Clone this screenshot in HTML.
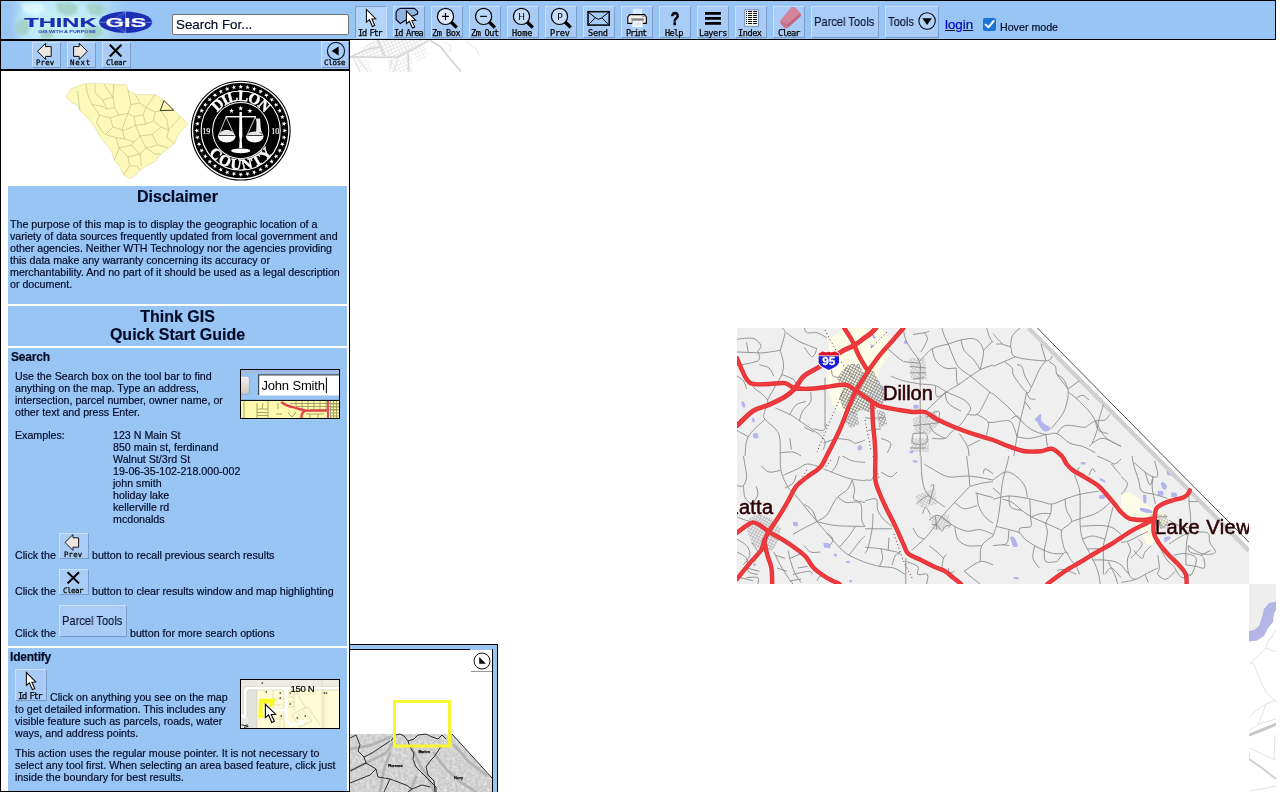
<!DOCTYPE html>
<html lang="en">
<head>
<meta charset="utf-8">
<title>Think GIS - Dillon County</title>
<style>
html,body{margin:0;padding:0;background:#fff;}
body{width:1280px;height:800px;overflow:hidden;position:relative;font-family:"Liberation Sans",Arial,sans-serif;font-size:10.667px;line-height:12px;color:#020a26;}
.abs{position:absolute;}
#map{position:absolute;left:0;top:0;width:1280px;height:800px;overflow:hidden;}
#toolbar{position:absolute;left:0;top:0;width:1276px;height:40px;box-sizing:border-box;border:1px solid #000;background:#99c5f5;}
#panel{position:absolute;left:0;top:39px;width:350px;height:753px;box-sizing:border-box;border:1px solid #000;border-top:2px solid #000;background:#fff;}
#nav{position:absolute;left:1px;top:41px;width:348px;height:28px;background:#99c5f5;border-bottom:2px solid #000;}
.cell{position:absolute;left:8px;width:339px;background:#99c5f5;}
.btn{position:absolute;box-sizing:border-box;background:#a8ccf6;border:1px solid;border-color:#c9e1fb #7c9cc8 #7c9cc8 #c9e1fb;}
.btn.on{background:#b4d4f9;border-color:#7c9cc8 #c9e1fb #c9e1fb #7c9cc8;}
.lb{position:absolute;font-family:"DejaVu Sans Mono","Liberation Mono",monospace;font-size:8.6px;line-height:10px;white-space:nowrap;color:#000;will-change:transform;-webkit-text-stroke:.25px #000;}
.t{position:absolute;white-space:nowrap;will-change:transform;-webkit-text-stroke:.18px #020a26;}
svg{will-change:transform;}
.h16{font-size:16px;line-height:18px;font-weight:bold;text-align:center;}
.h12{font-size:12px;line-height:14px;font-weight:bold;letter-spacing:-.2px;}
.pt{font-size:12.8px;line-height:14px;color:#07102a;transform:scaleX(.868);transform-origin:0 0;-webkit-text-stroke:.1px #07102a;}
</style>
</head>
<body>
<div id="map">
<svg class="abs" style="left:350px;top:40px;" width="140" height="32" viewBox="350 40 140 32"><defs><pattern id="fs" width="3.4" height="3.4" patternUnits="userSpaceOnUse" patternTransform="rotate(-24)"><path d="M0 .5H3.4M.5 0V3.4" stroke="#dedede" stroke-width=".8" fill="none"/></pattern></defs><path d="M356 55L366 45L378 40H426L416 48L406 53L397 57H372Z" fill="url(#fs)" opacity=".9"/><path d="M388 58L408 54L412 58L413 72H390Z" fill="url(#fs)" opacity=".7"/><path d="M410 52L424 45L428 50L426 58L418 62Z" fill="url(#fs)" opacity=".55"/><path d="M354 58L368 59L372 72H358Z" fill="url(#fs)" opacity=".5"/><g fill="none" stroke="#d6d6d6" stroke-linecap="round"><path d="M350.5 56.8L368 49.3L380.5 46.8" stroke-width="1.6"/><path d="M350.5 56.8L383 57.4L398 56.8L408 51.8L418 46.8L428 41" stroke-width="1.8"/><path d="M378 40.5L384.3 55.5" stroke-width="1.8"/><path d="M430.5 40.5L440.5 46.8L450.5 59.3L460.5 71" stroke-width="1.8"/><path d="M408 51.8L408.6 71" stroke-width="1.6"/><path d="M465.5 41L475.5 48L479.3 55" stroke-width=".9" stroke="#e2e2e2"/><path d="M444 42L451 46L450 52" stroke-width=".8" stroke="#e2e2e2"/><path d="M353 58L360 71M358 58L367 71M392 60L389 71M398 58L394 71" stroke-width=".9" stroke="#dcdcdc"/></g></svg>
<svg class="abs" style="left:1249px;top:584px;" width="27" height="216" viewBox="1249 584 27 216"><path d="M1249 584H1276V604L1270 606L1265 612L1263 622L1258 631L1249 634Z" fill="#eee"/><path d="M1249 631L1254 630L1259 626L1262 617L1264 609L1269 603L1276 601.5V610L1274 613L1273 622L1268 628L1264 636L1257 640.5L1249 641.5Z" fill="#b4b4e6"/><g fill="none" stroke="#dcdcdc" stroke-width=".8"><path d="M1276 630L1268 641L1266 648L1276 652M1268 641L1274 636M1266 648L1254 660L1250 663L1254 664L1260 680L1266 692L1276 702"/><path d="M1249 717L1258 709L1266 704L1276 700M1266 704L1262 715L1258 725M1249 748L1262 754L1276 760M1249 730L1262 723L1276 719M1275 735L1274 760M1250 752L1249 760"/><path d="M1249 791L1262 789L1276 786"/></g><path d="M1249 735L1262 730L1272 726L1276 724" fill="none" stroke="#c8c8c8" stroke-width="3"/><path d="M1249 759L1262 768L1276 779" fill="none" stroke="#d0d0d0" stroke-width="2"/></svg>
<svg class="abs" style="left:737px;top:328px;" width="512" height="256" viewBox="0 0 512 256">
<defs><pattern id="st" width="2.8" height="2.8" patternUnits="userSpaceOnUse" patternTransform="rotate(28)"><path d="M0 .5H2.8M.5 0V2.8" stroke="#8a8a8a" stroke-width=".85" fill="none"/></pattern><clipPath id="tc"><rect width="512" height="256"/></clipPath></defs>
<g clip-path="url(#tc)">
<rect width="512" height="256" fill="#efefef"/>
<path d="M293.4 0H512V220.8Z" fill="#fff"/>
<path d="M92 12 C94.0 10.5 99.3 5.0 104 3 C108.7 1.0 114.0 0.5 120 0 C126.0 -0.5 135.0 -1.3 140 0 C145.0 1.3 148.2 3.7 150 8 C151.8 12.3 152.3 20.0 151 26 C149.7 32.0 144.8 38.0 142 44 C139.2 50.0 136.7 56.3 134 62 C131.3 67.7 129.7 74.3 126 78 C122.3 81.7 116.7 83.7 112 84 C107.3 84.3 101.3 83.3 98 80 C94.7 76.7 93.3 70.7 92 64 C90.7 57.3 90.3 44.0 90 40Z" fill="#fdfde6" opacity=".9"/>
<path d="M384 166 C385.7 165.8 390.5 163.8 394 165 C397.5 166.2 401.0 170.3 405 173 C409.0 175.7 413.8 178.8 418 181 C422.2 183.2 427.8 184.2 430 186 C432.2 187.8 432.0 189.2 431 192 C430.0 194.8 426.5 199.3 424 203 C421.5 206.7 418.2 211.5 416 214 C413.8 216.5 412.7 219.0 411 218 C409.3 217.0 407.8 211.3 406 208 C404.2 204.7 402.7 200.7 400 198 C397.3 195.3 392.7 194.8 390 192 C387.3 189.2 385.0 182.8 384 181Z" fill="#fdfde6" opacity=".9"/>
<path d="M4.4 73.5 C4.8 73.6 6.3 73.2 7 74.1 C7.7 75.0 8.4 77.8 8.3 78.7 C8.2 79.6 7.0 79.7 6.4 79.4 C5.8 79.1 5.1 77.2 4.8 76.7ZM14.7 90.1 C15.1 90.2 16.6 90.0 17.1 90.7 C17.6 91.4 17.9 93.4 17.6 94 C17.3 94.6 15.8 94.2 15.4 94.3ZM15.8 106 C16.6 105.9 19.5 104.8 20.4 105.4 C21.3 106.1 21.7 109.1 21 109.9 C20.3 110.7 17.2 110.2 16.4 110.2ZM120.5 118.7 C121.0 118.4 122.9 116.3 123.7 116.7 C124.5 117.1 125.5 120.3 125.1 121.3 C124.7 122.3 121.8 122.4 121.1 122.6ZM134.8 6.8 C135.2 6.9 136.8 6.8 137.5 7.5 C138.2 8.2 139.0 10.4 138.8 10.8 C138.6 11.2 136.6 10.2 136.1 10.1ZM133.2 16.4 C133.6 16.5 135.3 16.5 135.8 17 C136.3 17.5 136.7 19.3 136.4 19.6 C136.1 19.9 134.2 19.1 133.8 19ZM143.8 58.2 C144.6 58.3 147.4 57.9 148.4 58.8 C149.4 59.7 150.3 62.7 149.8 63.4 C149.3 64.1 146.0 62.9 145.2 62.8ZM176.5 77.1 C177.3 77.1 180.3 76.4 181.1 76.9 C181.9 77.5 181.9 79.8 181.1 80.4 C180.3 81.0 177.3 80.4 176.5 80.4ZM172.4 122.7 C172.9 122.7 175.1 122.3 175.7 122.7 C176.2 123.1 176.2 124.9 175.7 125.3 C175.2 125.7 173.3 125.3 172.8 125.3ZM166.8 13.1 C167.2 13.0 168.9 12.0 169.4 12.4 C169.9 12.8 170.3 15.1 170 15.7 C169.7 16.2 167.8 15.7 167.4 15.7ZM297.6 91.9 C298.3 91.1 300.5 88.2 301.6 87.3 C302.7 86.4 303.8 85.9 304.2 86.7 C304.6 87.5 303.5 90.3 304.2 91.9 C304.9 93.5 306.7 95.3 308.1 96.5 C309.5 97.7 312.0 98.1 312.7 99.1 C313.4 100.1 313.1 101.7 312.1 102.4 C311.1 103.1 308.3 103.8 306.8 103.1 C305.3 102.4 304.0 100.0 302.9 98.5 C301.8 97.0 300.7 94.7 300.3 93.9ZM55.8 194 C56.5 194.1 59.5 193.6 60.3 194.3 C61.1 195.0 61.2 197.4 60.6 198 C60.0 198.6 57.1 197.8 56.4 197.7ZM86.3 215 C87.3 215.1 91.1 214.8 92.2 215.6 C93.3 216.4 93.8 219.3 92.9 220 C92.0 220.7 88.0 219.7 87 219.6ZM97.1 225.9 C97.5 225.9 99.3 225.7 99.7 226.1 C100.1 226.5 100.1 228.1 99.7 228.5 C99.3 228.9 97.7 228.5 97.3 228.5ZM109.2 233 C109.7 233.0 111.9 232.7 112.4 233 C112.9 233.3 112.9 234.7 112.4 235 C111.9 235.3 109.7 235.0 109.2 235ZM112.3 252.2 C112.7 252.2 114.5 251.9 114.9 252.2 C115.3 252.5 115.3 253.9 114.9 254.2 C114.5 254.5 112.7 254.2 112.3 254.2ZM16.3 235.5 C16.7 235.5 18.2 235.3 18.6 235.7 C19.0 236.1 19.0 237.5 18.6 237.9 C18.2 238.3 16.7 237.9 16.3 237.9ZM175.7 132.3 C176.5 132.4 179.6 132.3 180.3 132.7 C181.0 133.1 180.8 134.2 180.1 134.5 C179.4 134.8 176.6 134.2 175.9 134.2ZM272.8 209.1 C273.5 209.1 275.5 207.8 276.8 209.1 C278.1 210.4 280.3 215.3 280.7 217 C281.1 218.7 280.2 218.8 279.4 219 C278.6 219.2 277.0 219.3 276.1 218.3 C275.2 217.3 274.5 214.0 274.2 213.1ZM343.7 133.9 C344.5 134.0 347.6 133.9 348.3 134.3 C349.0 134.7 348.8 136.2 348.1 136.5 C347.4 136.8 344.6 136.3 343.9 136.3ZM362.2 167.5 C363.1 167.4 366.6 166.4 367.5 166.9 C368.4 167.4 368.6 169.9 367.7 170.6 C366.8 171.3 363.3 171.0 362.4 171.1ZM276.5 249 C277.3 249.1 280.3 248.9 281.1 249.3 C281.9 249.7 281.8 251.0 281.1 251.3 C280.4 251.6 277.5 251.1 276.8 251ZM362.3 150.1 C363.2 150.4 366.5 151.3 367.5 152.1 C368.5 152.9 368.8 154.6 368.2 154.7 C367.6 154.8 364.4 153.0 363.6 152.7ZM402.9 179.8 C403.8 179.9 406.1 180.0 408.1 180.4 C410.1 180.8 413.6 181.6 414.7 182.4 C415.8 183.2 415.8 184.7 414.7 185 C413.6 185.3 410.0 184.8 408.1 184.4 C406.2 184.0 403.9 182.7 403.1 182.4ZM420.6 162.9 C421.5 163.0 424.9 162.5 425.8 163.3 C426.7 164.1 426.6 166.8 425.8 167.5 C425.0 168.2 421.8 167.3 421 167.3ZM434.2 164.5 C435.1 164.6 438.5 164.1 439.4 164.9 C440.3 165.7 440.2 168.4 439.4 169.1 C438.6 169.8 435.2 168.9 434.4 168.9ZM423.8 155.1 C424.3 155.0 425.8 154.0 426.8 154.4 C427.8 154.8 429.4 156.5 429.7 157.7 C430.0 158.9 429.0 161.0 428.4 161.6 C427.8 162.2 426.6 161.8 426 161.2 C425.4 160.6 424.8 158.8 424.5 158.3ZM406 167.3 C406.5 167.3 408.7 166.2 409.2 167.5 C409.7 168.8 409.5 173.9 409 175.1 C408.5 176.3 406.8 174.9 406.4 174.9ZM427.1 209.2 C428.1 209.1 432.0 208.2 433 208.5 C434.0 208.8 433.9 210.1 433 211.1 C432.1 212.1 428.6 213.8 427.7 214.4ZM429.4 142.9 C430.3 143.0 433.8 142.8 434.7 143.6 C435.6 144.4 435.7 147.0 434.9 147.5 C434.1 148.0 430.9 146.9 430.1 146.8Z" fill="#b3b3ee"/>
<path d="M291.6 0L512 222.6" stroke="#d0d0d0" stroke-width="4.4" fill="none"/>
<path d="M300.4 0L340 40.4L426 127.6L512 214.2" stroke="#3a3a3a" stroke-width=".9" fill="none"/>
<path d="M104 44L112 36L122 36L126 44L136 42L140 50L146 60L150 72L140 80L132 84L124 82L116 86L106 80L102 70L106 60L100 52Z" fill="url(#st)"/>
<path d="M108 84L120 84L122 96L114 100L108 94Z" fill="url(#st)" opacity=".8"/>
<path d="M140 82L148 84L150 96L142 100Z" fill="url(#st)" opacity=".8"/>
<path d="M12 190L22 186L34 190L44 200L42 212L36 222L26 224L16 216L10 204Z" fill="url(#st)" opacity=".55"/>
<path d="M172 30L188 30L190 52L174 52Z" fill="url(#st)" opacity=".4"/>
<path d="M176 90L198 82L202 96L192 106L178 106Z" fill="url(#st)" opacity=".38"/>
<path d="M174 110L192 110L192 124L174 124Z" fill="url(#st)" opacity=".38"/>
<path d="M178 168L198 160L200 176L184 180Z" fill="url(#st)" opacity=".38"/>
<path d="M192 188L212 186L214 200L196 202Z" fill="url(#st)" opacity=".38"/>
<path d="M412 186L430 186L432 200L414 202Z" fill="url(#st)" opacity=".55"/>
<path d="M0 11.2 C2.7 11.1 12.0 9.3 16 10.4 C20.0 11.5 23.1 15.2 24 17.6 C24.9 20.0 18.4 24.0 21.6 24.8 C24.8 25.6 39.6 22.8 43.2 22.4M43.2 22.4 C44.0 19.5 47.7 8.5 48 4.8 C48.3 1.1 45.3 0.8 44.8 0M43.2 22.4 C43.7 24.5 46.1 31.2 46.4 35.2 C46.7 39.2 46.4 42.1 44.8 46.4 C43.2 50.7 39.2 56.5 36.8 60.8 C34.4 65.1 31.5 70.1 30.4 72M0 24 L21.6 24.8M0 37.6 C3.5 36.8 17.2 34.9 20.8 32.8 C24.4 30.7 21.5 26.1 21.6 24.8M49.6 4.8 C51.5 6.1 55.7 10.1 60.8 12.8 C65.9 15.5 76.8 19.5 80 20.8M67.2 0 C67.7 0.8 68.3 4.0 70.4 4.8 C72.5 5.6 76.8 4.0 80 4.8 C83.2 5.6 88.0 8.8 89.6 9.6M44.8 46.4 C46.7 47.2 53.6 49.6 56 51.2 C58.4 52.8 58.7 55.2 59.2 56M16 59.2 C18.4 61.3 28.5 67.7 30.4 72 C32.3 76.3 27.6 81.6 27.2 84.8 C26.8 88.0 25.6 87.7 28 91.2 C30.4 94.7 39.1 99.5 41.6 105.6 C44.1 111.7 42.9 124.3 43.2 128M28 91.2 C25.2 94.1 14.5 102.7 11.2 108.8 C7.9 114.9 8.5 124.8 8 128M0 102.4 L11.2 108.8M38.4 80 C40.8 81.1 48.8 84.3 52.8 86.4 C56.8 88.5 56.8 88.8 62.4 92.8 C68.0 96.8 82.4 105.6 86.4 110.4 C90.4 115.2 86.4 119.7 86.4 121.6M52.8 86.4 C53.9 84.8 56.5 78.9 59.2 76.8 C61.9 74.7 67.2 74.1 68.8 73.6M62.4 92.8 C62.9 91.2 63.7 86.4 65.6 83.2 C67.5 80.0 72.3 76.8 73.6 73.6 C74.9 70.4 73.6 65.6 73.6 64M88 49.6 L88 99.2M43.2 124.8 C45.3 124.7 52.5 123.5 56 124 C59.5 124.5 62.7 127.3 64 128M99.2 110.4 C101.3 110.7 108.8 111.2 112 112 C115.2 112.8 115.7 115.2 118.4 115.2 C121.1 115.2 126.4 112.5 128 112M86.4 115.2 L99.2 110.4M76.8 100.8 C78.4 101.1 84.3 103.2 86.4 102.4 C88.5 101.6 89.1 97.1 89.6 96M166.4 0 C166.7 1.6 166.9 6.4 168 9.6 C169.1 12.8 170.4 15.2 172.8 19.2 C175.2 23.2 180.7 28.8 182.4 33.6 C184.1 38.4 183.1 39.7 183.2 48 C183.3 56.3 183.2 69.9 183.2 83.2 C183.2 96.5 183.2 120.5 183.2 128M204.8 0 C205.3 1.6 206.9 6.9 208 9.6 C209.1 12.3 209.6 12.3 211.2 16 C212.8 19.7 215.7 28.0 217.6 32 C219.5 36.0 219.7 37.3 222.4 40 C225.1 42.7 231.7 46.7 233.6 48M182.4 33.6 C184.5 31.5 190.4 23.7 195.2 20.8 C200.0 17.9 206.4 17.5 211.2 16 C216.0 14.5 219.5 12.8 224 12 C228.5 11.2 234.7 9.5 238.4 11.2 C242.1 12.9 245.6 17.3 246.4 22.4 C247.2 27.5 243.7 38.4 243.2 41.6M187.2 4.8 C187.7 5.9 190.9 8.0 190.4 11.2 C189.9 14.4 185.1 21.9 184 24M176 6.4 C177.9 6.1 184.5 5.3 187.2 4.8 C189.9 4.3 191.2 3.5 192 3.2M249.6 0 C250.1 1.6 251.7 7.2 252.8 9.6 C253.9 12.0 255.5 13.6 256 14.4M246.4 22.4 L256 12.8M243.2 41.6 L256 36.8M219.2 40 C219.3 42.4 219.5 51.7 220 54.4 C220.5 57.1 222.0 55.7 222.4 56M233.6 48 C231.7 49.3 226.4 53.3 222.4 56 C218.4 58.7 214.7 60.0 209.6 64 C204.5 68.0 195.5 76.8 192 80 C188.5 83.2 189.3 82.7 188.8 83.2M183.2 56 C185.7 56.3 194.0 56.3 198.4 57.6 C202.8 58.9 204.8 61.6 209.6 64 C214.4 66.4 223.2 69.3 227.2 72 C231.2 74.7 233.1 77.6 233.6 80 C234.1 82.4 232.0 83.7 230.4 86.4 C228.8 89.1 226.7 93.1 224 96 C221.3 98.9 217.1 101.6 214.4 104 C211.7 106.4 211.2 109.3 208 110.4 C204.8 111.5 197.3 110.4 195.2 110.4M233.6 48 L243.2 41.6M233.6 48 C236.8 50.7 249.1 61.1 252.8 64 C256.5 66.9 255.5 65.3 256 65.6M252.8 64 C251.7 66.1 248.5 73.1 246.4 76.8 C244.3 80.5 242.7 84.8 240 86.4 C237.3 88.0 232.0 86.4 230.4 86.4M240 86.4 C241.9 87.7 249.6 90.7 251.2 94.4 C252.8 98.1 248.8 106.1 249.6 108.8 C250.4 111.5 254.9 110.1 256 110.4M251.2 94.4 L256 94.4M166.4 33.6 L182.4 35.2M172.8 44.8 L188.8 44.8M172.8 38.4 L188.8 40M176 51.2 L187.2 49.6M176 97.6 C178.7 97.3 187.5 96.5 192 96 C196.5 95.5 201.3 94.7 203.2 94.4M176 105.6 C178.1 105.6 186.7 104.0 188.8 105.6 C190.9 107.2 190.9 113.6 188.8 115.2 C186.7 116.8 178.1 116.8 176 115.2 C173.9 113.6 176.0 107.2 176 105.6M172.8 120 L188.8 120M188.8 89.6 C190.9 88.5 199.5 82.7 201.6 83.2 C203.7 83.7 201.6 91.2 201.6 92.8M222.4 105.6 C223.7 107.7 228.8 114.7 230.4 118.4 C232.0 122.1 231.7 126.4 232 128M230.4 118.4 L243.2 112M128 89.6 C129.1 89.7 130.9 90.4 134.4 90.4 C137.9 90.4 146.4 89.7 148.8 89.6M131.2 102.4 L144 100.8M256 5.6 C257.6 7.3 262.7 13.7 265.6 16 C268.5 18.3 271.5 17.1 273.6 19.2 C275.7 21.3 272.5 26.5 278.4 28.8 C284.3 31.1 302.7 32.9 308.8 32.8 C314.9 32.7 314.1 28.8 315.2 28M283.2 0 C281.9 1.3 276.8 4.8 275.2 8 C273.6 11.2 273.9 17.3 273.6 19.2M256 38.4 C257.9 37.6 263.5 35.2 267.2 33.6 C270.9 32.0 276.5 29.6 278.4 28.8M267.2 33.6 C268.5 34.7 273.6 37.6 275.2 40 C276.8 42.4 274.4 44.0 276.8 48 C279.2 52.0 286.7 62.1 289.6 64 C292.5 65.9 292.3 62.9 294.4 59.2 C296.5 55.5 300.0 46.0 302.4 41.6 C304.8 37.2 307.7 34.3 308.8 32.8M280 36.8 C280.8 37.1 283.5 36.5 284.8 38.4 C286.1 40.3 286.4 44.5 288 48 C289.6 51.5 293.3 57.3 294.4 59.2M312 33.6 C313.1 34.4 317.1 36.3 318.4 38.4 C319.7 40.5 318.1 42.9 320 46.4 C321.9 49.9 327.7 56.3 329.6 59.2 C331.5 62.1 331.1 61.9 331.2 64 C331.3 66.1 331.2 68.5 330.4 72 C329.6 75.5 328.7 80.5 326.4 84.8 C324.1 89.1 318.9 94.9 316.8 97.6 C314.7 100.3 314.1 100.3 313.6 100.8M331.2 60.8 L342.4 52.8M331.2 64 C332.5 65.1 335.7 67.2 339.2 70.4 C342.7 73.6 348.8 79.5 352 83.2 C355.2 86.9 355.7 88.5 358.4 92.8 C361.1 97.1 363.7 104.5 368 108.8 C372.3 113.1 381.3 116.8 384 118.4M366.4 76.8 C365.6 79.5 362.7 88.5 361.6 92.8 C360.5 97.1 361.1 98.7 360 102.4 C358.9 106.1 356.5 112.5 355.2 115.2 C353.9 117.9 352.5 117.9 352 118.4M348.8 99.2 C350.4 98.1 355.2 94.0 358.4 92.8 C361.6 91.6 365.6 93.1 368 92 C370.4 90.9 372.0 87.3 372.8 86.4M256 65.6 C258.7 68.0 267.2 75.3 272 80 C276.8 84.7 280.8 89.9 284.8 93.6 C288.8 97.3 292.0 100.3 296 102.4 C300.0 104.5 304.8 105.9 308.8 106.4 C312.8 106.9 316.0 104.1 320 105.6 C324.0 107.1 328.5 113.1 332.8 115.2 C337.1 117.3 341.3 116.8 345.6 118.4 C349.9 120.0 356.3 123.7 358.4 124.8M289.6 64 C289.1 66.7 287.5 75.2 286.4 80 C285.3 84.8 284.3 88.0 283.2 92.8 C282.1 97.6 281.1 102.9 280 108.8 C278.9 114.7 277.3 124.8 276.8 128M256 94.4 C258.7 94.1 268.5 92.0 272 92.8 C275.5 93.6 275.5 96.5 276.8 99.2 C278.1 101.9 279.5 107.2 280 108.8M273.6 91.2 C274.7 90.7 278.1 87.6 280 88 C281.9 88.4 284.0 92.7 284.8 93.6M280 108.8 C282.1 109.1 288.0 110.8 292.8 110.4 C297.6 110.0 306.1 107.1 308.8 106.4M308.8 106.4 L310.4 118.4M320 105.6 C321.3 104.3 323.7 98.7 328 97.6 C332.3 96.5 342.1 98.9 345.6 99.2 C349.1 99.5 348.3 99.2 348.8 99.2M355.2 115.2 C357.1 114.4 361.6 109.9 366.4 110.4 C371.2 110.9 381.1 117.1 384 118.4M289.6 64 C290.1 65.1 291.3 69.2 292.8 70.4 C294.3 71.6 297.5 71.1 298.4 71.2M288 73.6 L293.6 81.6M6.4 128 C6.7 129.6 7.5 134.1 8 137.6 C8.5 141.1 9.9 145.5 9.6 148.8 C9.3 152.1 8.0 156.1 6.4 157.6 C4.8 159.1 1.1 157.6 0 157.6M6.4 157.6 C6.7 159.6 6.7 166.5 8 169.6 C9.3 172.7 13.3 174.9 14.4 176M43.2 128 C43.3 130.4 43.2 138.1 44 142.4 C44.8 146.7 46.5 150.4 48 153.6 C49.5 156.8 50.9 159.2 52.8 161.6 C54.7 164.0 54.7 162.7 59.2 168 C63.7 173.3 74.9 187.5 80 193.6 C85.1 199.7 85.9 200.5 89.6 204.8 C93.3 209.1 98.7 215.5 102.4 219.2 C106.1 222.9 107.7 224.7 112 227.2 C116.3 229.7 125.3 233.2 128 234.4M46.4 147.2 C48.8 146.1 56.8 142.7 60.8 140.8 C64.8 138.9 66.7 136.3 70.4 136 C74.1 135.7 81.1 138.7 83.2 139.2M94.4 144 C95.2 142.9 97.9 140.3 99.2 137.6 C100.5 134.9 101.9 129.6 102.4 128M86.4 140.8 C87.7 141.3 90.1 142.4 94.4 144 C98.7 145.6 106.4 148.9 112 150.4 C117.6 151.9 125.3 152.4 128 152.8M80 193.6 C81.6 192.5 86.9 190.1 89.6 187.2 C92.3 184.3 94.1 179.1 96 176 C97.9 172.9 98.4 171.2 100.8 168.8 C103.2 166.4 108.0 164.4 110.4 161.6 C112.8 158.8 114.4 153.6 115.2 152M115.2 152 C115.6 153.6 117.3 158.4 117.6 161.6 C117.9 164.8 115.1 169.1 116.8 171.2 C118.5 173.3 126.1 173.9 128 174.4M100.8 168.8 C102.1 169.7 105.1 173.3 108.8 174.4 C112.5 175.5 120.5 172.3 123.2 175.2 C125.9 178.1 124.0 188.1 124.8 192 C125.6 195.9 127.5 197.3 128 198.4M80 193.6 C83.2 194.3 91.2 196.8 99.2 197.6 C107.2 198.4 123.2 198.3 128 198.4M56 206.4 C57.9 205.3 63.2 202.1 67.2 200 C71.2 197.9 77.9 194.7 80 193.6M102.4 219.2 C104.0 217.3 109.3 211.5 112 208 C114.7 204.5 117.3 200.0 118.4 198.4M112 227.2 C113.9 224.8 120.5 216.0 123.2 212.8 C125.9 209.6 127.2 208.8 128 208M51.2 222.4 C51.5 223.7 51.7 226.7 52.8 230.4 C53.9 234.1 55.7 240.8 57.6 244.8 C59.5 248.8 62.9 252.8 64 254.4M52.8 230.4 L64 225.6M36.8 224 C37.9 226.1 40.8 232.5 43.2 236.8 C45.6 241.1 49.1 246.4 51.2 249.6 C53.3 252.8 55.2 254.9 56 256M105.6 128 C107.2 128.8 111.5 131.7 115.2 132.8 C118.9 133.9 125.9 134.1 128 134.4M0 188.8 C1.3 189.3 5.3 191.1 8 192 C10.7 192.9 14.7 194.0 16 194.4M19.2 158.4 C19.5 159.7 21.3 163.5 20.8 166.4 C20.3 169.3 16.8 174.4 16 176M56 246.4 C58.7 245.9 68.8 243.2 72 243.2 C75.2 243.2 74.7 245.9 75.2 246.4M80 252.8 C80.5 252.0 81.6 248.5 83.2 248 C84.8 247.5 88.5 249.3 89.6 249.6M0 224 C1.6 225.1 7.7 227.2 9.6 230.4 C11.5 233.6 9.3 240.5 11.2 243.2 C13.1 245.9 19.2 245.9 20.8 246.4M9.6 249.6 C11.5 249.6 18.9 248.5 20.8 249.6 C22.7 250.7 20.8 254.9 20.8 256M48 160 C49.3 159.2 54.1 157.3 56 155.2 C57.9 153.1 58.7 148.5 59.2 147.2M184 128 C184.1 131.2 184.3 141.9 184.8 147.2 C185.3 152.5 186.0 156.5 187.2 160 C188.4 163.5 191.2 166.7 192 168M187.2 136 C188.5 136.8 191.2 138.7 195.2 140.8 C199.2 142.9 205.1 147.6 211.2 148.8 C217.3 150.0 224.5 147.5 232 148 C239.5 148.5 252.0 151.3 256 152M229.6 128 C230.0 131.3 231.5 142.9 232 148 C232.5 153.1 232.7 156.7 232.8 158.4M232.8 158.4 C230.3 161.1 222.3 169.3 217.6 174.4 C212.9 179.5 208.5 184.3 204.8 188.8 C201.1 193.3 198.1 197.9 195.2 201.6 C192.3 205.3 190.7 207.7 187.2 211.2 C183.7 214.7 176.5 220.5 174.4 222.4M232.8 158.4 C234.8 157.9 240.9 156.0 244.8 155.2 C248.7 154.4 254.1 153.9 256 153.6M240 164.8 C240.3 166.9 240.3 173.6 241.6 177.6 C242.9 181.6 245.6 185.9 248 188.8 C250.4 191.7 254.7 194.1 256 195.2M238.4 164.8 L256 169.6M204.8 188.8 C206.9 190.4 213.3 196.0 217.6 198.4 C221.9 200.8 226.1 202.7 230.4 203.2 C234.7 203.7 238.9 201.1 243.2 201.6 C247.5 202.1 253.9 205.6 256 206.4M193.6 158.4 C194.1 158.1 196.5 155.7 196.8 156.8 C197.1 157.9 196.0 161.6 195.2 164.8 C194.4 168.0 192.5 174.1 192 176M179.2 176 C180.5 174.9 185.1 170.9 187.2 169.6 C189.3 168.3 190.4 167.7 192 168 C193.6 168.3 194.1 169.3 196.8 171.2 C199.5 173.1 206.1 177.9 208 179.2M185.6 185.6 C186.1 184.5 187.5 178.9 188.8 179.2 C190.1 179.5 192.8 185.9 193.6 187.2M192 192 C193.3 191.2 197.3 187.2 200 187.2 C202.7 187.2 205.6 190.4 208 192 C210.4 193.6 214.4 195.7 214.4 196.8 C214.4 197.9 209.6 197.3 208 198.4 C206.4 199.5 206.1 203.5 204.8 203.2 C203.5 202.9 201.6 197.9 200 196.8 C198.4 195.7 196.0 196.8 195.2 196.8M198.4 188.8 L200 201.6M128 200.8 L155.2 200.8M136 185.6 C135.9 188.0 136.0 194.4 135.2 200 C134.4 205.6 132.4 214.9 131.2 219.2 C130.0 223.5 128.5 224.5 128 225.6M128 219.2 C130.7 219.5 138.1 219.9 144 220.8 C149.9 221.7 160.0 224.1 163.2 224.8M128 234.4 C130.4 235.1 137.6 237.5 142.4 238.4 C147.2 239.3 152.5 238.7 156.8 240 C161.1 241.3 166.1 245.3 168 246.4M152 209.6 L151.2 222.4M168.8 230.4 L168.8 256M169.6 233.6 C171.5 234.4 178.9 236.3 180.8 238.4 C182.7 240.5 179.2 245.1 180.8 246.4 C182.4 247.7 188.9 244.8 190.4 246.4 C191.9 248.0 189.7 254.4 189.6 256M204.8 240 C205.1 238.4 205.6 232.7 206.4 230.4 C207.2 228.1 209.1 227.1 209.6 226.4M243.2 233.6 C243.5 230.9 242.7 221.9 244.8 217.6 C246.9 213.3 254.1 209.6 256 208M227.2 243.2 C229.9 241.6 238.4 234.7 243.2 233.6 C248.0 232.5 253.9 236.3 256 236.8M227.2 243.2 C228.8 244.5 234.1 249.1 236.8 251.2 C239.5 253.3 242.1 255.2 243.2 256M246.4 145.6 C246.7 144.8 246.4 140.8 248 140.8 C249.6 140.8 254.7 144.8 256 145.6M128 172.8 C129.9 172.5 137.1 169.6 139.2 171.2 C141.3 172.8 139.5 178.9 140.8 182.4 C142.1 185.9 144.8 189.3 147.2 192 C149.6 194.7 153.9 197.3 155.2 198.4M128 152 C129.1 152.0 133.1 152.5 134.4 152 C135.7 151.5 135.7 149.3 136 148.8M155.2 236.8 C155.7 235.2 157.1 229.1 158.4 227.2 C159.7 225.3 162.4 225.9 163.2 225.6M211.2 240 C211.5 240.8 211.7 244.3 212.8 244.8 C213.9 245.3 216.8 243.5 217.6 243.2M272 128 C271.5 130.1 269.9 136.5 268.8 140.8 C267.7 145.1 266.4 149.3 265.6 153.6 C264.8 157.9 264.4 162.7 264 166.4 C263.6 170.1 263.7 171.7 263.2 176 C262.7 180.3 261.5 188.3 260.8 192 C260.1 195.7 260.0 195.7 259.2 198.4 C258.4 201.1 256.5 206.4 256 208M256 152 C258.1 150.7 264.8 144.5 268.8 144 C272.8 143.5 276.8 146.4 280 148.8 C283.2 151.2 286.3 154.9 288 158.4 C289.7 161.9 290.0 167.7 290.4 169.6M256 171.2 C258.7 170.7 266.3 168.1 272 168 C277.7 167.9 285.1 169.5 290.4 170.4 C295.7 171.3 299.9 172.7 304 173.6 C308.1 174.5 311.2 176.4 315.2 176 C319.2 175.6 323.5 172.8 328 171.2 C332.5 169.6 336.8 167.7 342.4 166.4 C348.0 165.1 358.4 163.7 361.6 163.2M265.6 171.2 C267.2 171.7 272.0 172.5 275.2 174.4 C278.4 176.3 281.6 180.0 284.8 182.4 C288.0 184.8 290.4 186.7 294.4 188.8 C298.4 190.9 303.7 192.9 308.8 195.2 C313.9 197.5 322.1 201.2 324.8 202.4M292.8 171.2 C292.9 174.1 293.5 184.3 293.6 188.8 C293.7 193.3 295.3 196.5 293.6 198.4 C291.9 200.3 285.1 198.9 283.2 200 C281.3 201.1 282.5 204.0 282.4 204.8M259.2 198.4 C261.3 198.9 268.1 200.5 272 201.6 C275.9 202.7 279.7 203.2 282.4 204.8 C285.1 206.4 285.5 209.1 288 211.2 C290.5 213.3 294.4 215.7 297.6 217.6 C300.8 219.5 304.0 221.1 307.2 222.4 C310.4 223.7 313.6 225.1 316.8 225.6 C320.0 226.1 324.8 225.6 326.4 225.6M314.4 176 C314.3 177.6 314.5 182.4 313.6 185.6 C312.7 188.8 309.3 192.0 308.8 195.2 C308.3 198.4 310.7 200.3 310.4 204.8 C310.1 209.3 307.7 219.5 307.2 222.4M328 171.2 C328.3 173.1 328.5 178.7 329.6 182.4 C330.7 186.1 335.2 190.3 334.4 193.6 C333.6 196.9 326.3 198.9 324.8 202.4 C323.3 205.9 325.1 211.1 325.6 214.4 C326.1 217.7 327.3 220.5 328 222.4 C328.7 224.3 329.3 225.1 329.6 225.6M334.4 193.6 C336.0 193.1 340.0 191.7 344 190.4 C348.0 189.1 354.4 187.5 358.4 185.6 C362.4 183.7 365.6 181.1 368 179.2 C370.4 177.3 372.0 175.2 372.8 174.4M337.6 147.2 C338.4 149.6 341.5 156.8 342.4 161.6 C343.3 166.4 343.1 169.9 343.2 176 C343.3 182.1 342.8 192.5 343.2 198.4 C343.6 204.3 344.4 207.5 345.6 211.2 C346.8 214.9 348.3 216.5 350.4 220.8 C352.5 225.1 356.5 232.5 358.4 236.8 C360.3 241.1 360.8 243.2 361.6 246.4 C362.4 249.6 362.9 254.4 363.2 256M343.2 198.4 C345.2 198.3 351.3 197.7 355.2 197.6 C359.1 197.5 362.9 197.2 366.4 197.6 C369.9 198.0 373.1 198.5 376 200 C378.9 201.5 382.7 205.3 384 206.4M376 179.2 C375.2 182.4 372.5 193.1 371.2 198.4 C369.9 203.7 368.8 208.0 368 211.2 C367.2 214.4 366.7 214.1 366.4 217.6 C366.1 221.1 366.4 227.2 366.4 232 C366.4 236.8 366.4 244.0 366.4 246.4M350.4 220.8 L366.4 220.8M355.2 232 C357.1 232.0 362.7 231.7 366.4 232 C370.1 232.3 374.7 232.8 377.6 233.6 C380.5 234.4 382.9 236.3 384 236.8M371.2 233.6 C372.3 235.7 376.0 242.7 377.6 246.4 C379.2 250.1 380.3 254.4 380.8 256M360 128 C361.9 128.8 368.3 131.5 371.2 132.8 C374.1 134.1 375.5 136.3 377.6 136 C379.7 135.7 382.9 132.0 384 131.2M374.4 136 C375.7 137.6 380.8 143.7 382.4 145.6 C384.0 147.5 383.7 146.9 384 147.2M256 217.6 C257.6 217.5 262.9 216.8 265.6 216.8 C268.3 216.8 270.9 217.5 272 217.6M320 233.6 C321.1 232.3 324.8 227.2 326.4 225.6 C328.0 224.0 328.5 223.2 329.6 224 C330.7 224.8 331.2 228.0 332.8 230.4 C334.4 232.8 337.6 235.7 339.2 238.4 C340.8 241.1 341.9 245.1 342.4 246.4M320 242.4 C321.3 242.3 324.8 240.9 328 241.6 C331.2 242.3 337.3 245.6 339.2 246.4M256 160 L263.2 166.4M337.6 147.2 L342.4 139.2M352 147.2 C352.5 146.1 354.1 141.3 355.2 140.8 C356.3 140.3 357.9 143.5 358.4 144M368 246.4 C369.1 245.3 371.7 239.5 374.4 240 C377.1 240.5 382.4 248.0 384 249.6M395.2 128 C395.5 129.6 395.7 133.6 396.8 137.6 C397.9 141.6 400.3 147.7 401.6 152 C402.9 156.3 402.1 160.8 404.8 163.2 C407.5 165.6 413.3 165.2 417.6 166.4 C421.9 167.6 428.3 169.7 430.4 170.4M396.8 134.4 C398.7 136.0 404.8 141.6 408 144 C411.2 146.4 413.9 148.3 416 148.8 C418.1 149.3 420.5 149.9 420.8 147.2 C421.1 144.5 418.1 135.2 417.6 132.8M416 148.8 C415.9 150.7 414.8 155.5 415.2 160 C415.6 164.5 417.9 173.3 418.4 176M384 148.8 C385.1 149.9 389.9 152.8 390.4 155.2 C390.9 157.6 388.3 161.3 387.2 163.2 C386.1 165.1 384.5 165.9 384 166.4M452 164.8 C452.0 166.4 451.7 170.4 452 174.4 C452.3 178.4 453.5 184.5 453.6 188.8 C453.7 193.1 453.5 195.7 452.8 200 C452.1 204.3 450.3 208.3 449.6 214.4 C448.9 220.5 448.9 233.1 448.8 236.8M452 173.6 L460.8 173.6M384 214.4 C385.3 214.1 389.1 213.9 392 212.8 C394.9 211.7 398.4 209.6 401.6 208 C404.8 206.4 409.6 204.0 411.2 203.2M390.4 214.4 C390.9 215.7 393.6 219.5 393.6 222.4 C393.6 225.3 390.7 228.0 390.4 232 C390.1 236.0 390.7 243.2 392 246.4 C393.3 249.6 395.7 251.2 398.4 251.2 C401.1 251.2 404.3 248.3 408 246.4 C411.7 244.5 418.7 241.1 420.8 240M396.8 222.4 C398.1 223.7 402.9 230.1 404.8 230.4 C406.7 230.7 406.4 226.1 408 224 C409.6 221.9 413.3 218.7 414.4 217.6M384 236.8 L392 246.4M420.8 227.2 C421.1 229.3 422.4 236.8 422.4 240 C422.4 243.2 419.7 244.5 420.8 246.4 C421.9 248.3 425.9 251.7 428.8 251.2 C431.7 250.7 436.8 244.5 438.4 243.2M422.4 217.6 C423.5 219.7 426.4 226.9 428.8 230.4 C431.2 233.9 435.5 237.1 436.8 238.4M432 216 C434.1 214.7 441.1 209.9 444.8 208 C448.5 206.1 450.1 205.3 454.4 204.8 C458.7 204.3 467.3 203.2 470.4 204.8 C473.5 206.4 471.5 211.2 472.8 214.4 C474.1 217.6 478.8 222.0 478.4 224 C478.0 226.0 473.3 226.4 470.4 226.4 C467.5 226.4 464.0 225.5 460.8 224 C457.6 222.5 452.8 218.7 451.2 217.6M451.2 217.6 C451.5 218.7 450.7 222.4 452.8 224 C454.9 225.6 461.6 225.9 464 227.2 C466.4 228.5 466.7 229.9 467.2 232 C467.7 234.1 468.5 238.9 467.2 240 C465.9 241.1 462.3 238.9 459.2 238.4 C456.1 237.9 450.5 237.1 448.8 236.8M436.8 227.2 C438.7 226.9 444.3 225.1 448 225.6 C451.7 226.1 458.1 226.9 459.2 230.4 C460.3 233.9 456.3 244.0 454.4 246.4 C452.5 248.8 449.1 245.1 448 244.8M384 254.4 C385.6 254.1 391.2 253.3 393.6 252.8 C396.0 252.3 397.6 251.5 398.4 251.2M401.6 211.2 C402.1 212.3 406.1 214.4 404.8 217.6 C403.5 220.8 395.5 228.3 393.6 230.4M408 144 C408.8 146.1 411.5 156.0 412.8 156.8 C414.1 157.6 415.5 150.1 416 148.8M419.2 188.8 L430.4 188.8M420.8 192 L425.6 198.4M422.4 192 C422.7 193.3 422.7 199.5 424 200 C425.3 200.5 429.3 196.0 430.4 195.2M0 48 C1.1 48.8 4.8 50.7 6.4 52.8 C8.0 54.9 9.1 59.5 9.6 60.8M94.4 40 C94.7 41.3 94.4 46.4 96 48 C97.6 49.6 102.7 49.3 104 49.6M22.4 36.8 C24.0 37.3 29.6 38.1 32 40 C34.4 41.9 36.0 46.7 36.8 48M67.2 19.2 C68.5 20.8 73.1 28.5 75.2 28.8 C77.3 29.1 79.2 22.1 80 20.8M9.6 14.4 L11.2 24M52.8 110.4 L54.4 121.6M67.2 99.2 L76.8 104M195.2 20.8 C195.7 22.7 196.3 28.8 198.4 32 C200.5 35.2 204.5 38.7 208 40 C211.5 41.3 217.3 40.0 219.2 40M224 12 C224.5 13.7 225.1 19.1 227.2 22.4 C229.3 25.7 234.1 28.8 236.8 32 C239.5 35.2 242.1 40.0 243.2 41.6M208 64 C208.5 65.9 208.5 72.0 211.2 75.2 C213.9 78.4 221.9 81.9 224 83.2M198.4 57.6 C198.7 59.5 198.1 67.7 200 68.8 C201.9 69.9 208.0 64.8 209.6 64M153.6 48 C155.7 48.8 161.5 51.5 166.4 52.8 C171.3 54.1 180.4 55.5 183.2 56M148.8 19.2 C150.7 20.8 157.1 26.4 160 28.8 C162.9 31.2 165.3 32.8 166.4 33.6M192 96 C192.8 97.3 194.1 101.6 196.8 104 C199.5 106.4 206.1 109.3 208 110.4M144 110.4 C145.6 111.2 152.5 112.8 153.6 115.2 C154.7 117.6 150.9 123.2 150.4 124.8M320 46.4 C321.1 47.2 324.5 48.8 326.4 51.2 C328.3 53.6 330.4 59.2 331.2 60.8M339.2 70.4 C340.3 69.9 343.5 66.9 345.6 67.2 C347.7 67.5 350.9 71.2 352 72M304 16 L308.8 32.8M259.2 16 L265.6 16M358.4 92.8 C358.9 94.4 359.5 100.3 361.6 102.4 C363.7 104.5 369.6 105.1 371.2 105.6M0 211.2 C1.6 212.3 7.5 214.9 9.6 217.6 C11.7 220.3 13.3 224.0 12.8 227.2 C12.3 230.4 7.5 235.2 6.4 236.8M14.4 214.4 C15.5 216.0 20.3 220.8 20.8 224 C21.3 227.2 18.1 232.0 17.6 233.6M9.6 240 L22.4 243.2M38.4 227.2 L48 230.4M40 240 L49.6 243.2M60.8 240 L70.4 238.4M52.8 252.8 L64 251.2M3.2 249.6 L16 252.8M89.6 204.8 C90.7 205.9 95.5 209.1 96 211.2 C96.5 213.3 93.3 216.5 92.8 217.6M67.2 176 C68.5 177.1 73.1 179.5 75.2 182.4 C77.3 185.3 79.2 191.7 80 193.6M24 137.6 C25.3 138.7 28.8 143.2 32 144 C35.2 144.8 41.3 142.7 43.2 142.4M67.2 217.6 C68.3 218.7 70.9 222.9 73.6 224 C76.3 225.1 81.6 224.0 83.2 224M144 144 C145.6 144.8 150.9 148.8 153.6 148.8 C156.3 148.8 158.9 144.8 160 144M217.6 198.4 C218.1 200.5 218.7 208.0 220.8 211.2 C222.9 214.4 226.4 216.5 230.4 217.6 C234.4 218.7 242.4 217.6 244.8 217.6M176 200 C176.8 201.3 178.9 206.1 180.8 208 C182.7 209.9 186.1 210.7 187.2 211.2M217.6 174.4 C219.2 175.5 223.5 180.3 227.2 180.8 C230.9 181.3 237.9 178.1 240 177.6M144 220.8 C144.3 222.4 145.9 227.5 145.6 230.4 C145.3 233.3 142.9 237.1 142.4 238.4M192 217.6 C193.3 218.7 197.6 221.9 200 224 C202.4 226.1 205.3 229.3 206.4 230.4M294.4 188.8 C296.0 188.3 300.8 186.1 304 185.6 C307.2 185.1 312.0 185.6 313.6 185.6M272 168 C272.3 169.9 271.5 176.8 273.6 179.2 C275.7 181.6 282.9 181.9 284.8 182.4M297.6 217.6 C297.3 219.7 295.2 226.7 296 230.4 C296.8 234.1 301.3 238.4 302.4 240M307.2 222.4 C307.5 224.3 306.7 231.7 308.8 233.6 C310.9 235.5 318.1 233.6 320 233.6M345.6 211.2 C347.2 210.7 351.5 208.0 355.2 208 C358.9 208.0 365.9 210.7 368 211.2M272 201.6 C271.7 203.7 271.5 211.9 270.4 214.4 C269.3 216.9 266.4 216.4 265.6 216.8M432 192 C433.3 192.8 436.5 195.5 440 196.8 C443.5 198.1 450.7 199.5 452.8 200M408 246.4 L411.2 254.4M464 227.2 L473.6 222.4M436.8 238.4 C438.1 240.3 441.9 248.3 444.8 249.6 C447.7 250.9 452.8 246.9 454.4 246.4" stroke="#8b8b8b" stroke-width=".92" fill="none" stroke-linejoin="round"/>
<path d="M88 2L102 28M104 34L116 50M106 64L96 86L80 124M134 20L150 4M128 92L134 122M136 128L142 150M157 206L166 232L176 252M94 132L88 140M70 142L64 150" stroke="#5a1420" stroke-width=".9" stroke-dasharray="1 2.6" fill="none"/>
<path d="M0 97.6 C2.7 95.2 10.7 86.5 16 83 C21.3 79.5 26.7 79.2 32 76.8 C37.3 74.4 43.7 71.5 48 68.8 C52.3 66.1 54.4 64.3 57.6 60.8 C60.8 57.3 63.0 51.6 67 48 C71.0 44.4 75.4 43.2 81.6 39.2 C87.8 35.2 98.1 27.6 104 24 C109.9 20.4 112.8 20.0 116.8 17.6 C120.8 15.2 125.1 11.7 128 9.6 C130.9 7.5 132.6 6.4 134.4 4.8 C136.2 3.2 138.2 0.8 139 0" stroke="#de3236" stroke-width="4.9" fill="none" stroke-linecap="round" stroke-linejoin="round"/>
<path d="M0 30.4 C0.8 32.3 3.2 38.1 4.8 41.6 C6.4 45.1 7.7 48.8 9.6 51.2 C11.5 53.6 12.3 55.2 16 56 C19.7 56.8 26.7 56.1 32 56 C37.3 55.9 43.7 54.5 48 55.2 C52.3 55.9 53.6 59.1 57.6 60 C61.6 60.9 66.9 60.9 72 60.8 C77.1 60.7 81.9 59.9 88 59.2 C94.1 58.5 103.7 56.3 108.8 56.8 C113.9 57.3 115.2 60.4 118.4 62.4 C121.6 64.4 124.8 66.7 128 68.8 C131.2 70.9 134.9 73.6 137.6 75.2 C140.3 76.8 140.3 77.3 144 78.4 C147.7 79.5 154.7 80.7 160 81.6 C165.3 82.5 171.3 83.6 176 84 C180.7 84.4 184.0 82.8 188 84 C192.0 85.2 195.1 88.7 200 91.2 C204.9 93.7 210.9 96.5 217.6 99.2 C224.3 101.9 233.6 105.1 240 107.2 C246.4 109.3 250.7 110.1 256 112 C261.3 113.9 266.7 116.5 272 118.4 C277.3 120.3 282.7 122.4 288 123.2 C293.3 124.0 299.5 123.6 304 123.2 C308.5 122.8 311.7 120.0 315.2 120.8 C318.7 121.6 322.4 125.5 324.8 128 C327.2 130.5 327.7 133.6 329.6 136 C331.5 138.4 333.1 140.3 336 142.4 C338.9 144.5 343.2 146.4 347.2 148.8 C351.2 151.2 356.5 154.1 360 156.8 C363.5 159.5 365.1 161.6 368 164.8 C370.9 168.0 374.9 172.8 377.6 176 C380.3 179.2 381.6 181.6 384 184 C386.4 186.4 388.5 189.1 392 190.4 C395.5 191.7 400.5 192.0 404.8 192 C409.1 192.0 415.5 190.7 417.6 190.4" stroke="#de3236" stroke-width="4.4" fill="none" stroke-linecap="round" stroke-linejoin="round"/>
<path d="M166.4 0 C164.8 1.9 160.5 6.9 156.8 11.2 C153.1 15.5 147.7 21.1 144 25.6 C140.3 30.1 137.1 34.7 134.4 38.4 C131.7 42.1 130.7 43.7 128 48 C125.3 52.3 121.1 58.9 118.4 64 C115.7 69.1 114.7 72.0 112 78.4 C109.3 84.8 106.1 94.1 102.4 102.4 C98.7 110.7 92.8 121.9 89.6 128 C86.4 134.1 86.4 135.7 83.2 139.2 C80.0 142.7 74.4 145.6 70.4 148.8 C66.4 152.0 62.4 154.4 59.2 158.4 C56.0 162.4 54.1 167.7 51.2 172.8 C48.3 177.9 44.8 183.7 41.6 188.8 C38.4 193.9 34.4 199.2 32 203.2 C29.6 207.2 28.5 209.6 27.2 212.8 C25.9 216.0 26.4 218.7 24 222.4 C21.6 226.1 16.8 230.4 12.8 235.2 C8.8 240.0 2.1 248.5 0 251.2" stroke="#de3236" stroke-width="4.4" fill="none" stroke-linecap="round" stroke-linejoin="round"/>
<path d="M107.2 0 C108.5 2.1 112.8 8.3 115.2 12.8 C117.6 17.3 119.5 22.9 121.6 27.2 C123.7 31.5 126.4 35.8 128 38.4 C129.6 41.0 130.5 42.2 131 43" stroke="#de3236" stroke-width="4.4" fill="none" stroke-linecap="round" stroke-linejoin="round"/>
<path d="M135.2 75.2 C135.3 78.7 135.6 89.9 136 96 C136.4 102.1 137.2 106.7 137.6 112 C138.0 117.3 138.3 121.3 138.4 128 C138.5 134.7 137.7 145.9 138.4 152 C139.1 158.1 140.7 160.3 142.4 164.8 C144.1 169.3 146.1 173.6 148.8 179.2 C151.5 184.8 155.5 192.3 158.4 198.4 C161.3 204.5 164.3 211.5 166.4 216 C168.5 220.5 168.3 222.9 171.2 225.6 C174.1 228.3 179.7 229.9 184 232 C188.3 234.1 192.8 236.5 196.8 238.4 C200.8 240.3 204.8 241.3 208 243.2 C211.2 245.1 213.3 247.5 216 249.6 C218.7 251.7 222.7 254.9 224 256" stroke="#de3236" stroke-width="4.4" fill="none" stroke-linecap="round" stroke-linejoin="round"/>
<path d="M0 204.8 C1.6 203.6 6.9 199.3 9.6 197.6 C12.3 195.9 13.9 194.5 16 194.4 C18.1 194.3 19.7 195.2 22.4 196.8 C25.1 198.4 28.3 201.6 32 204 C35.7 206.4 40.3 208.4 44.8 211.2 C49.3 214.0 55.2 217.9 59.2 220.8 C63.2 223.7 65.9 225.6 68.8 228.8 C71.7 232.0 73.3 236.5 76.8 240 C80.3 243.5 85.3 246.9 89.6 249.6 C93.9 252.3 100.3 254.9 102.4 256" stroke="#de3236" stroke-width="4.4" fill="none" stroke-linecap="round" stroke-linejoin="round"/>
<path d="M27.2 212.8 C27.7 215.2 29.2 222.7 30.4 227.2 C31.6 231.7 33.6 235.2 34.4 240 C35.2 244.8 35.1 253.3 35.2 256" stroke="#de3236" stroke-width="4.4" fill="none" stroke-linecap="round" stroke-linejoin="round"/>
<path d="M310.4 256 C313.3 253.9 322.4 246.9 328 243.2 C333.6 239.5 338.7 236.8 344 233.6 C349.3 230.4 354.9 226.9 360 224 C365.1 221.1 370.4 218.4 374.4 216 C378.4 213.6 380.3 212.0 384 209.6 C387.7 207.2 392.5 204.0 396.8 201.6 C401.1 199.2 406.1 197.1 409.6 195.2 C413.1 193.3 416.3 191.2 417.6 190.4" stroke="#de3236" stroke-width="4.4" fill="none" stroke-linecap="round" stroke-linejoin="round"/>
<path d="M417.6 190.4 C417.9 188.8 417.9 183.2 419.2 180.8 C420.5 178.4 422.7 177.5 425.6 176 C428.5 174.5 433.3 173.1 436.8 172 C440.3 170.9 444.0 170.7 446.4 169.6 C448.8 168.5 450.1 166.8 451.2 165.6 C452.3 164.4 452.5 162.9 452.8 162.4" stroke="#de3236" stroke-width="4.4" fill="none" stroke-linecap="round" stroke-linejoin="round"/>
<path d="M416.8 192 C416.8 194.1 415.9 200.8 416.8 204.8 C417.7 208.8 419.9 212.3 422.4 216 C424.9 219.7 428.5 223.5 432 227.2 C435.5 230.9 440.4 235.2 443.2 238.4 C446.0 241.6 447.7 243.5 448.8 246.4 C449.9 249.3 449.5 254.4 449.6 256" stroke="#de3236" stroke-width="4.4" fill="none" stroke-linecap="round" stroke-linejoin="round"/>
<path d="M0 97.6 C2.7 95.2 10.7 86.5 16 83 C21.3 79.5 26.7 79.2 32 76.8 C37.3 74.4 43.7 71.5 48 68.8 C52.3 66.1 54.4 64.3 57.6 60.8 C60.8 57.3 63.0 51.6 67 48 C71.0 44.4 75.4 43.2 81.6 39.2 C87.8 35.2 98.1 27.6 104 24 C109.9 20.4 112.8 20.0 116.8 17.6 C120.8 15.2 125.1 11.7 128 9.6 C130.9 7.5 132.6 6.4 134.4 4.8 C136.2 3.2 138.2 0.8 139 0" stroke="#f03a3e" stroke-width="3.1" fill="none" stroke-linecap="round" stroke-linejoin="round"/>
<path d="M0 30.4 C0.8 32.3 3.2 38.1 4.8 41.6 C6.4 45.1 7.7 48.8 9.6 51.2 C11.5 53.6 12.3 55.2 16 56 C19.7 56.8 26.7 56.1 32 56 C37.3 55.9 43.7 54.5 48 55.2 C52.3 55.9 53.6 59.1 57.6 60 C61.6 60.9 66.9 60.9 72 60.8 C77.1 60.7 81.9 59.9 88 59.2 C94.1 58.5 103.7 56.3 108.8 56.8 C113.9 57.3 115.2 60.4 118.4 62.4 C121.6 64.4 124.8 66.7 128 68.8 C131.2 70.9 134.9 73.6 137.6 75.2 C140.3 76.8 140.3 77.3 144 78.4 C147.7 79.5 154.7 80.7 160 81.6 C165.3 82.5 171.3 83.6 176 84 C180.7 84.4 184.0 82.8 188 84 C192.0 85.2 195.1 88.7 200 91.2 C204.9 93.7 210.9 96.5 217.6 99.2 C224.3 101.9 233.6 105.1 240 107.2 C246.4 109.3 250.7 110.1 256 112 C261.3 113.9 266.7 116.5 272 118.4 C277.3 120.3 282.7 122.4 288 123.2 C293.3 124.0 299.5 123.6 304 123.2 C308.5 122.8 311.7 120.0 315.2 120.8 C318.7 121.6 322.4 125.5 324.8 128 C327.2 130.5 327.7 133.6 329.6 136 C331.5 138.4 333.1 140.3 336 142.4 C338.9 144.5 343.2 146.4 347.2 148.8 C351.2 151.2 356.5 154.1 360 156.8 C363.5 159.5 365.1 161.6 368 164.8 C370.9 168.0 374.9 172.8 377.6 176 C380.3 179.2 381.6 181.6 384 184 C386.4 186.4 388.5 189.1 392 190.4 C395.5 191.7 400.5 192.0 404.8 192 C409.1 192.0 415.5 190.7 417.6 190.4" stroke="#f03a3e" stroke-width="2.6" fill="none" stroke-linecap="round" stroke-linejoin="round"/>
<path d="M166.4 0 C164.8 1.9 160.5 6.9 156.8 11.2 C153.1 15.5 147.7 21.1 144 25.6 C140.3 30.1 137.1 34.7 134.4 38.4 C131.7 42.1 130.7 43.7 128 48 C125.3 52.3 121.1 58.9 118.4 64 C115.7 69.1 114.7 72.0 112 78.4 C109.3 84.8 106.1 94.1 102.4 102.4 C98.7 110.7 92.8 121.9 89.6 128 C86.4 134.1 86.4 135.7 83.2 139.2 C80.0 142.7 74.4 145.6 70.4 148.8 C66.4 152.0 62.4 154.4 59.2 158.4 C56.0 162.4 54.1 167.7 51.2 172.8 C48.3 177.9 44.8 183.7 41.6 188.8 C38.4 193.9 34.4 199.2 32 203.2 C29.6 207.2 28.5 209.6 27.2 212.8 C25.9 216.0 26.4 218.7 24 222.4 C21.6 226.1 16.8 230.4 12.8 235.2 C8.8 240.0 2.1 248.5 0 251.2" stroke="#f03a3e" stroke-width="2.6" fill="none" stroke-linecap="round" stroke-linejoin="round"/>
<path d="M107.2 0 C108.5 2.1 112.8 8.3 115.2 12.8 C117.6 17.3 119.5 22.9 121.6 27.2 C123.7 31.5 126.4 35.8 128 38.4 C129.6 41.0 130.5 42.2 131 43" stroke="#f03a3e" stroke-width="2.6" fill="none" stroke-linecap="round" stroke-linejoin="round"/>
<path d="M135.2 75.2 C135.3 78.7 135.6 89.9 136 96 C136.4 102.1 137.2 106.7 137.6 112 C138.0 117.3 138.3 121.3 138.4 128 C138.5 134.7 137.7 145.9 138.4 152 C139.1 158.1 140.7 160.3 142.4 164.8 C144.1 169.3 146.1 173.6 148.8 179.2 C151.5 184.8 155.5 192.3 158.4 198.4 C161.3 204.5 164.3 211.5 166.4 216 C168.5 220.5 168.3 222.9 171.2 225.6 C174.1 228.3 179.7 229.9 184 232 C188.3 234.1 192.8 236.5 196.8 238.4 C200.8 240.3 204.8 241.3 208 243.2 C211.2 245.1 213.3 247.5 216 249.6 C218.7 251.7 222.7 254.9 224 256" stroke="#f03a3e" stroke-width="2.6" fill="none" stroke-linecap="round" stroke-linejoin="round"/>
<path d="M0 204.8 C1.6 203.6 6.9 199.3 9.6 197.6 C12.3 195.9 13.9 194.5 16 194.4 C18.1 194.3 19.7 195.2 22.4 196.8 C25.1 198.4 28.3 201.6 32 204 C35.7 206.4 40.3 208.4 44.8 211.2 C49.3 214.0 55.2 217.9 59.2 220.8 C63.2 223.7 65.9 225.6 68.8 228.8 C71.7 232.0 73.3 236.5 76.8 240 C80.3 243.5 85.3 246.9 89.6 249.6 C93.9 252.3 100.3 254.9 102.4 256" stroke="#f03a3e" stroke-width="2.6" fill="none" stroke-linecap="round" stroke-linejoin="round"/>
<path d="M27.2 212.8 C27.7 215.2 29.2 222.7 30.4 227.2 C31.6 231.7 33.6 235.2 34.4 240 C35.2 244.8 35.1 253.3 35.2 256" stroke="#f03a3e" stroke-width="2.6" fill="none" stroke-linecap="round" stroke-linejoin="round"/>
<path d="M310.4 256 C313.3 253.9 322.4 246.9 328 243.2 C333.6 239.5 338.7 236.8 344 233.6 C349.3 230.4 354.9 226.9 360 224 C365.1 221.1 370.4 218.4 374.4 216 C378.4 213.6 380.3 212.0 384 209.6 C387.7 207.2 392.5 204.0 396.8 201.6 C401.1 199.2 406.1 197.1 409.6 195.2 C413.1 193.3 416.3 191.2 417.6 190.4" stroke="#f03a3e" stroke-width="2.6" fill="none" stroke-linecap="round" stroke-linejoin="round"/>
<path d="M417.6 190.4 C417.9 188.8 417.9 183.2 419.2 180.8 C420.5 178.4 422.7 177.5 425.6 176 C428.5 174.5 433.3 173.1 436.8 172 C440.3 170.9 444.0 170.7 446.4 169.6 C448.8 168.5 450.1 166.8 451.2 165.6 C452.3 164.4 452.5 162.9 452.8 162.4" stroke="#f03a3e" stroke-width="2.6" fill="none" stroke-linecap="round" stroke-linejoin="round"/>
<path d="M416.8 192 C416.8 194.1 415.9 200.8 416.8 204.8 C417.7 208.8 419.9 212.3 422.4 216 C424.9 219.7 428.5 223.5 432 227.2 C435.5 230.9 440.4 235.2 443.2 238.4 C446.0 241.6 447.7 243.5 448.8 246.4 C449.9 249.3 449.5 254.4 449.6 256" stroke="#f03a3e" stroke-width="2.6" fill="none" stroke-linecap="round" stroke-linejoin="round"/>
<g transform="translate(80.2,21.9) scale(1.085,1.02)"><path d="M.6 3.2Q3 2 5 .4Q8 2.4 10.6 .6Q13.4 2.4 16.2 .4Q18.4 2 20.8 3.2L20.8 12.4Q20.4 17 10.7 20.4Q1 17 .6 12.4Z" fill="#fff"/><path d="M1.3 3.6Q3.2 2.6 5 1.3Q8 3.3 10.6 1.5Q13.4 3.3 16.2 1.3Q18.2 2.6 20.1 3.6L20.1 5.6H1.3Z" fill="#dc1626"/><path d="M1.3 6.2H20.1V12.2Q19.7 16.4 10.7 19.6Q1.7 16.4 1.3 12.2Z" fill="#1a1cd8"/><text x="10.7" y="15.1" text-anchor="middle" font-family="Liberation Sans,Arial,sans-serif" font-weight="bold" font-size="10.8" fill="#fff" stroke="#fff" stroke-width=".3">95</text></g>
<g font-family="Liberation Sans,Arial,sans-serif" font-size="20" fill="#2a0006" stroke="#2a0006" stroke-width=".5"><text x="146" y="71.8" textLength="49.8" lengthAdjust="spacing">Dillon</text><text x="-9.4" y="186.2" textLength="45.4" lengthAdjust="spacing">Latta</text><text x="418" y="205.6" textLength="95.6" lengthAdjust="spacing">Lake View</text></g>
</g></svg>
</div>
<div class="abs" style="left:350px;top:644px;width:147px;height:147px;border:1px solid #000;border-left:none;border-bottom:none;background:#99c5f5;z-index:3;box-sizing:content-box;"></div>
<svg class="abs" style="left:350px;top:649px;z-index:3;" width="143" height="143" viewBox="0 0 143 143"><defs><clipPath id="oc"><rect x="0" y="1" width="142" height="142"/></clipPath><filter id="mot" x="0" y="0" width="100%" height="100%"><feTurbulence type="fractalNoise" baseFrequency=".35" numOctaves="2" seed="4"/><feColorMatrix type="matrix" values="0 0 0 0 1  0 0 0 0 1  0 0 0 0 1  1.6 0 0 0 -.55"/><feComposite in2="SourceGraphic" operator="in"/></filter></defs><rect x="0" y="1" width="142" height="142" fill="#fff"/><path d="M0 .5H120M142.5 0V143" stroke="#000" stroke-width="1" fill="none"/><g clip-path="url(#oc)"><path d="M0 85H102L142 129V143H0Z" fill="#c9c9c9"/><path d="M0 85H102L142 129V143H0Z" fill="#fff" filter="url(#mot)" opacity=".7"/><g fill="none" stroke="#b4b4b4" stroke-width="2.8" stroke-linecap="round"><path d="M0 100L22 96L40 88M0 122L20 112L36 104L44 92M30 143L34 120L40 104M62 100L70 116L78 128L84 143M84 104L96 120L112 134L126 143M104 96L118 112L136 126M60 143L66 128"/></g><g fill="none" stroke="#2c2c2c" stroke-width="1" stroke-linejoin="round"><path d="M102 85L142 129"/><path d="M41 92L45 86L50 85L54 87L58 92L64 90L68 86L76 85L82 88L88 90L92 86L96 90"/><path d="M58 92L60 98L64 104L63 110L66 118L72 124L80 132L86 138L86 143"/><path d="M92 96L88 102L84 108L80 112L76 118L78 126L84 132L85 143"/><path d="M0 89L6 86M6 86L10 96L8 102L14 108L22 104L40 92M14 108L16 114L0 122M16 114L26 120L20 126L0 134M26 120L28 128L40 130L56 136L62 140M62 140L72 136L80 138M40 130L34 143M62 140L58 143"/></g><g font-family="Liberation Sans,Arial,sans-serif" font-weight="bold" font-size="3.9" fill="#000" stroke="#000" stroke-width=".25"><text x="68.4" y="103.8" textLength="11.4" lengthAdjust="spacingAndGlyphs">Marion</text><text x="38.2" y="118.2" textLength="14.4" lengthAdjust="spacingAndGlyphs">Florence</text><text x="104.2" y="130.2" textLength="8.6" lengthAdjust="spacingAndGlyphs">Horry</text></g></g><rect x="44.5" y="52.5" width="55" height="44.5" fill="none" stroke="#f6f632" stroke-width="3"/><circle cx="132" cy="12" r="8" fill="#fff" stroke="#111" stroke-width="1"/><path d="M129.2 8L136 14.8H129.2Z" fill="#0a0a0a"/><path d="M121 22.5H142" stroke="#9a9a9a" stroke-width="1"/></svg>
<div id="toolbar"></div>
<svg class="abs" style="left:1px;top:1px;" width="170" height="38" viewBox="1 1 170 38"><defs><radialGradient id="gl" cx="50%" cy="50%" r="50%"><stop offset="0" stop-color="#c6f2f8"/><stop offset=".7" stop-color="#bfeaf8"/><stop offset="1" stop-color="#bfeaf8" stop-opacity="0"/></radialGradient><linearGradient id="gf" x1="0" x2="1"><stop offset="0" stop-color="#b8e4f6" stop-opacity="0"/><stop offset=".12" stop-color="#b8e6f7" stop-opacity=".9"/><stop offset=".8" stop-color="#b4e0f6" stop-opacity=".75"/><stop offset="1" stop-color="#a4cef5" stop-opacity="0"/></linearGradient><filter id="bl" x="-20%" y="-20%" width="140%" height="140%"><feGaussianBlur stdDeviation="1.6"/></filter><clipPath id="lc"><rect x="1" y="1" width="170" height="38"/></clipPath></defs><g clip-path="url(#lc)"><rect x="10" y="1" width="122" height="38" fill="url(#gf)"/><ellipse cx="62" cy="24" rx="50" ry="30" fill="url(#gl)"/><g filter="url(#bl)" fill="#9fd0c4" opacity=".85"><path d="M56 3L70 2L78 6L76 14L66 16L58 12Z"/><path d="M86 4L100 4L106 10L100 16L90 14Z"/><path d="M16 22L24 18L30 24L28 34L20 36L14 30Z"/><path d="M84 28L100 26L104 34L96 39L84 38Z"/><path d="M40 30L52 30L54 38L42 39Z"/></g><g filter="url(#bl)" fill="#e4fbff" opacity=".8"><path d="M22 4L40 3L46 10L36 16L24 12Z"/><path d="M64 18L78 18L76 26L66 26Z"/></g><ellipse cx="125.6" cy="22.3" rx="26.6" ry="10.7" fill="#1c2fb4"/><path d="M99 22.3H152M125.6 11.6V33" stroke="#cfe0ff" stroke-width=".5" opacity=".8"/><path d="M125.6 11.6L108 22.3L125.6 33M125.6 11.6L117 22.3L125.6 33" stroke="#cfe0ff" stroke-width=".4" fill="none" opacity=".7"/><g font-family="Liberation Sans,Arial,sans-serif" font-weight="bold"><text x="24.2" y="27.1" font-size="12.6" textLength="72.4" lengthAdjust="spacingAndGlyphs" fill="#1b2eb2" stroke="#1b2eb2" stroke-width=".2">THINK</text><text x="105.4" y="27.2" font-size="12.8" textLength="41" lengthAdjust="spacingAndGlyphs" fill="#fff" stroke="#fff" stroke-width=".1">GIS</text><text x="38.2" y="32.6" font-size="3.6" textLength="57.6" lengthAdjust="spacingAndGlyphs" fill="#2a3cb8">GIS WITH A PURPOSE</text></g></g></svg>
<div class="abs" style="left:172px;top:14px;width:177px;height:21px;box-sizing:border-box;border:1px solid #767676;border-radius:2px;background:#fff;"></div>
<div class="t" style="left:176px;top:17px;font-size:13.333px;line-height:15px;">Search For...</div>
<div class="btn on" style="left:355px;top:6px;width:32px;height:32px;"></div>
<div class="btn" style="left:393px;top:6px;width:32px;height:32px;"></div>
<div class="btn" style="left:431px;top:6px;width:32px;height:32px;"></div>
<div class="btn" style="left:469px;top:6px;width:32px;height:32px;"></div>
<div class="btn" style="left:507px;top:6px;width:32px;height:32px;"></div>
<div class="btn" style="left:545px;top:6px;width:32px;height:32px;"></div>
<div class="btn" style="left:583px;top:6px;width:32px;height:32px;"></div>
<div class="btn" style="left:621px;top:6px;width:32px;height:32px;"></div>
<div class="btn" style="left:659px;top:6px;width:32px;height:32px;"></div>
<div class="btn" style="left:697px;top:6px;width:32px;height:32px;"></div>
<div class="btn" style="left:735px;top:6px;width:32px;height:32px;"></div>
<div class="btn" style="left:773px;top:6px;width:32px;height:32px;"></div>
<div class="btn" style="left:811px;top:6px;width:68px;height:32px;"></div>
<div class="btn" style="left:885px;top:6px;width:54px;height:32px;"></div>
<div class="t pt" style="left:814.4px;top:15px;">Parcel Tools</div>
<div class="t pt" style="left:888.4px;top:15px;">Tools</div>
<a class="t" style="left:945px;top:16.5px;font-size:13.333px;line-height:15px;color:#0000ee;text-decoration:underline;">login</a>
<div class="abs" style="left:983px;top:18px;width:13px;height:13px;background:#1b74d6;border-radius:2px;"></div>
<div class="t" style="left:999.6px;top:21px;">Hover mode</div>
<svg class="abs" style="left:0;top:0;" width="1276" height="40" viewBox="0 0 1276 40">
<path d="M366.40 9.40 L366.40 22.11 L369.41 19.68 L372.41 26.47 L374.74 25.31 L371.83 19.00 L375.71 18.71Z" fill="#fff" stroke="#000" stroke-width="1.02" stroke-linejoin="miter"/>
<path d="M396.1 12L398.3 9.2L401 8.3H414.5L417.6 11.4V13.9L413.9 15.5L410 16.5L405.8 20.1L400.4 23.6L396.1 19.5Z" fill="#8fb3e2" stroke="#0a0a1e" stroke-width="1.15" stroke-linejoin="round"/>
<path d="M406.40 11.00 L406.40 23.71 L409.41 21.28 L412.41 28.07 L414.74 26.91 L411.83 20.60 L415.71 20.31Z" fill="#fff" stroke="#000" stroke-width="1.02" stroke-linejoin="miter"/>
<path d="M451.10 22.00L456.80 27.70" stroke="#000" stroke-width="3.3" stroke-linecap="butt"/><circle cx="445.5" cy="16.4" r="8.1" fill="#dfeafc" stroke="#000" stroke-width="1.2"/><path d="M442 16.4H449M445.5 13V19.9" stroke="#000" stroke-width="1.2"/>
<path d="M489.20 22.00L494.90 27.70" stroke="#000" stroke-width="3.3" stroke-linecap="butt"/><circle cx="483.6" cy="16.4" r="8.1" fill="#b9d6f8" stroke="#000" stroke-width="1.2"/><path d="M480.2 16.4H486.9" stroke="#000" stroke-width="1.2"/>
<path d="M527.10 22.00L532.80 27.70" stroke="#000" stroke-width="3.3" stroke-linecap="butt"/><circle cx="521.5" cy="16.4" r="8.1" fill="#c6dcf9" stroke="#000" stroke-width="1.2"/><text x="521.6" y="19.9" text-anchor="middle" font-family="DejaVu Sans,sans-serif" font-size="9" fill="#000">H</text>
<path d="M565.10 22.00L570.80 27.70" stroke="#000" stroke-width="3.3" stroke-linecap="butt"/><circle cx="559.5" cy="16.4" r="8.1" fill="#c6dcf9" stroke="#000" stroke-width="1.2"/><text x="559.9" y="19.9" text-anchor="middle" font-family="DejaVu Sans,sans-serif" font-size="9" fill="#000">P</text>
<rect x="588" y="11.7" width="21.2" height="13.4" fill="#a3cbf7" stroke="#000" stroke-width="1.5"/><path d="M588.6 12.4L596 18.2Q598.6 20.4 601.2 18.2L608.6 12.4M588.6 24.4L595.4 17.8M608.6 24.4L601.8 17.8" fill="none" stroke="#000" stroke-width="1"/>
<rect x="632.8" y="8.8" width="9.2" height="6" fill="#d9ecfd"/><path d="M627.8 23.4V17L629.6 14.6H644.6L646.4 17V23.4H641.8V21.2H632.4V23.4Z" fill="#f4f1ef" stroke="#000" stroke-width="1.1" stroke-linejoin="round"/><rect x="631.3" y="18.3" width="12.6" height="2.4" fill="#8a8886"/><rect x="632.3" y="20.9" width="10.4" height="6.2" fill="#f4f8fc"/><path d="M634 23H641M634 25H641" stroke="#c9d2dc" stroke-width=".7"/><path d="M642.4 16.4H644.4" stroke="#555" stroke-width=".8"/>
<text x="675.1" y="24.6" text-anchor="middle" font-family="Liberation Sans,Arial,sans-serif" font-weight="bold" font-size="17.6" fill="#000" stroke="#000" stroke-width=".7" textLength="8.6" lengthAdjust="spacingAndGlyphs">?</text>
<path d="M705 13.4H721M705 18.4H721M705 23.4H721" stroke="#000" stroke-width="2.8"/>
<rect x="744.7" y="9.7" width="13.8" height="16.6" fill="#fff" stroke="#6f8fb4" stroke-width="1"/>
<path d="M746 11.4H747M748 11.4H752.1M753.1 11.4H757.1M746 13.4H747M748 13.4H752.1M753.1 13.4H757.1M746 15.4H747M748 15.4H752.1M753.1 15.4H757.1M746 17.45H747M748 17.45H752.1M753.1 17.45H757.1M746 19.5H747M748 19.5H752.1M753.1 19.5H757.1M746 21.5H747M748 21.5H752.1M753.1 21.5H757.1M746 23.55H747M748 23.55H752.1M753.1 23.55H757.1" stroke="#000" stroke-width="1"/>
<path d="M791.6 7.2Q793.6 6.4 795.2 7.6L800.4 13.4Q801.4 15 800.2 16.8L787.4 28Q785.6 28.8 784.2 27.8L780.6 23.4Q779.8 21.6 780.8 20.2Z" fill="#c9728a"/><path d="M791.6 7.2Q793.6 6.4 795.2 7.6L800.4 13.4L787 24.6L780.8 20.2Z" fill="#d6849a"/><path d="M787 24.6L800.4 13.4Q801.4 15 800.2 16.8L787.4 28Z" fill="#bd657e"/>
<circle cx="927.1" cy="21" r="8.2" fill="#b3d2f7" stroke="#05051a" stroke-width="1.1"/><path d="M922.3 18.3H931.9L927.1 25Z" fill="#000"/>
<path d="M985.6 24.6L988.4 27.4L993.6 21" fill="none" stroke="#fff" stroke-width="2" stroke-linecap="round" stroke-linejoin="round"/>
</svg>
<div class="lb" style="left:358.35px;top:27.82px;font-size:8.6px;letter-spacing:-1.13px;word-spacing:-0.70px;">Id Ftr</div>
<div class="lb" style="left:394.45px;top:27.82px;font-size:8.6px;letter-spacing:-0.96px;word-spacing:-0.70px;">Id Area</div>
<div class="lb" style="left:432.40px;top:27.82px;font-size:8.6px;letter-spacing:-0.31px;word-spacing:-0.70px;">Zm Box</div>
<div class="lb" style="left:471.15px;top:27.82px;font-size:8.6px;letter-spacing:-0.43px;word-spacing:-0.70px;">Zm Out</div>
<div class="lb" style="left:512.40px;top:27.82px;font-size:8.6px;letter-spacing:-0.05px;word-spacing:-0.70px;">Home</div>
<div class="lb" style="left:550.30px;top:27.82px;font-size:8.6px;letter-spacing:-0.25px;word-spacing:-0.70px;">Prev</div>
<div class="lb" style="left:588.15px;top:27.82px;font-size:8.6px;letter-spacing:-0.23px;word-spacing:-0.70px;">Send</div>
<div class="lb" style="left:626.30px;top:27.82px;font-size:8.6px;letter-spacing:-1.20px;word-spacing:-0.70px;">Print</div>
<div class="lb" style="left:665.10px;top:27.82px;font-size:8.6px;letter-spacing:-0.75px;word-spacing:-0.70px;">Help</div>
<div class="lb" style="left:699.15px;top:27.82px;font-size:8.6px;letter-spacing:-0.54px;word-spacing:-0.70px;">Layers</div>
<div class="lb" style="left:738.35px;top:27.82px;font-size:8.6px;letter-spacing:-0.46px;word-spacing:-0.70px;">Index</div>
<div class="lb" style="left:778.30px;top:27.82px;font-size:8.6px;letter-spacing:-0.88px;word-spacing:-0.70px;">Clear</div>
<div id="panel"></div>
<div id="nav"></div>
<div class="btn" style="left:32px;top:42px;width:29px;height:26px;"></div>
<div class="btn" style="left:67px;top:42px;width:29px;height:26px;"></div>
<div class="btn" style="left:102px;top:42px;width:29px;height:26px;"></div>
<div class="btn" style="left:321px;top:41px;width:28px;height:27px;"></div>
<svg class="abs" style="left:0;top:40px;" width="350" height="32" viewBox="0 40 350 32">
<path d="M37.5 51.3L45.6 43.3V46.6H51.2V56.4H45.6V59.5Z" fill="#ece6e0" stroke="#000" stroke-width=".95" stroke-linejoin="miter"/>
<path d="M87.3 51.3L79.2 43.3V46.6H73.6V56.4H79.2V59.5Z" fill="#ece6e0" stroke="#000" stroke-width=".95" stroke-linejoin="miter"/>
<path d="M109.8 44.8L121.4 56.4M121.4 44.8L109.8 56.4" stroke="#000" stroke-width="2.1"/>
<circle cx="336" cy="51" r="8.6" fill="#a9cdf6" stroke="#0a1a3a" stroke-width="1.2"/><path d="M331.6 51L338.6 46.4V55.6Z" fill="#000"/>
</svg>
<div class="lb" style="left:35.80px;top:58.44px;font-size:7.4px;letter-spacing:0.17px;word-spacing:-0.66px;">Prev</div>
<div class="lb" style="left:70.08px;top:58.44px;font-size:7.4px;letter-spacing:0.83px;word-spacing:-0.66px;">Next</div>
<div class="lb" style="left:105.55px;top:58.44px;font-size:7.4px;letter-spacing:-0.42px;word-spacing:-0.66px;">Clear</div>
<div class="lb" style="left:324.48px;top:58.44px;font-size:7.4px;letter-spacing:-0.23px;word-spacing:-0.66px;">Close</div>
<svg class="abs" style="left:60px;top:80px;" width="132" height="102" viewBox="60 80 132 102"><path d="M66.2 97 L71 88.7 L84.5 83.8 L95 83.5 L113 84.2 L126.5 85 L128 90.2 L135.5 94.7 L155 94.7 L158 96.2 L164 100.7 L173.7 110.2 L180.5 116.5 L188 124 L182 130 L177.5 136 L174.5 143.5 L168.5 148 L161 154 L155 161.5 L146 166 L140 170.5 L134 176.5 L129.5 178.7 L123.5 175 L120.5 167.5 L114.5 160 L111.5 151 L105.5 143.5 L99.5 136 L95 127 L87.5 118 L80 110.5 L77 104.5 L72.5 103Z" fill="#fcf9ba" stroke="#e4e0a4" stroke-width=".8" stroke-linejoin="round"/><path d="M77.7 91 L78.5 100 L80 110.5M86 84.2 L87.5 94 L92 104.5 L99.5 115M95 83.5 L95 92.5 L102.5 100 L113 97 L113.7 84.2M104 84.2 L108.5 91 L113 97M113 97 L114.5 107.5 L119 115 L128 113.5 L131 104.5 L128 90.2M102.5 100 L107 109 L114.5 107.5M92 104.5 L101 106 L107 109M99.5 115 L110 118 L119 115M99.5 115 L96.5 122.5 L101 130M110 118 L113 127 L105.5 134.5 L101 130M113 127 L122 130 L125 121 L128 113.5M131 104.5 L140 103 L146 107.5 L155 94.7M135.5 94.7 L140 103M146 107.5 L143 115 L134 116.5 L128 113.5M146 107.5 L155 112 L161 110.5 L164 100.7M155 112 L153.5 121 L146 124 L143 115M161 110.5 L167 119.5 L168.5 130 L180.5 116.5M153.5 121 L161 127 L168.5 130M134 116.5 L135.5 125.5 L125 130 L122 130M135.5 125.5 L146 124M135.5 125.5 L140 136 L134 142 L125 139 L122 130M140 136 L152 134.5 L161 127M152 134.5 L158 145 L168.5 148M140 136 L146 148 L158 145M105.5 134.5 L116 137.5 L125 139M116 137.5 L119 148 L114.5 160M119 148 L131 145 L134 142M131 145 L140 154 L146 148M140 154 L141.5 166M119 148 L128 157 L129.5 166 L123.5 175M128 157 L140 154M168.5 130 L167 137.5 L174.5 143.5M146 148 L155 154 L161 154M129.5 166 L137 166 L140 170.5" fill="none" stroke="#bdb87c" stroke-width=".6" stroke-linejoin="round"/><path d="M164 100.6L173.8 110.2L160.2 110.6Z" fill="#fdf9b4" stroke="#2a2a10" stroke-width=".9" stroke-linejoin="round"/></svg>
<svg class="abs" style="left:190px;top:80px;" width="102" height="102" viewBox="190 80 102 102">
<defs><path id="arcT" d="M211.10 130.60A29.6 29.6 0 0 1 270.30 130.60"/><path id="arcB" d="M201.80 130.60A38.9 38.9 0 0 0 279.60 130.60"/></defs>
<circle cx="240.7" cy="130.6" r="49.4" fill="#fff" stroke="#000" stroke-width="1.1"/>
<circle cx="240.7" cy="130.6" r="43.8" fill="none" stroke="#000" stroke-width="7.4"/>
<circle cx="240.7" cy="130.6" r="33.8" fill="none" stroke="#000" stroke-width="10.4"/>
<circle cx="240.7" cy="130.6" r="27.6" fill="#000"/>
<path d="M287.00 130.60L285.31 131.19L285.27 132.98L284.19 131.55L282.48 132.07L283.50 130.60L282.48 129.13L284.19 129.65L285.27 128.22L285.31 130.01ZM286.43 137.84L284.67 138.16L284.35 139.92L283.51 138.34L281.73 138.59L282.97 137.30L282.19 135.68L283.80 136.46L285.10 135.22L284.85 137.00ZM284.73 144.91L282.94 144.94L282.36 146.63L281.77 144.94L279.98 144.91L281.41 143.83L280.89 142.11L282.36 143.13L283.83 142.11L283.31 143.83ZM281.95 151.62L280.18 151.38L279.33 152.95L279.02 151.19L277.26 150.88L278.84 150.03L278.59 148.26L279.88 149.50L281.49 148.72L280.71 150.33ZM278.16 157.81L276.44 157.30L275.36 158.72L275.33 156.93L273.63 156.34L275.33 155.76L275.36 153.97L276.44 155.39L278.16 154.88L277.13 156.34ZM273.44 163.34L271.83 162.56L270.54 163.80L270.78 162.03L269.20 161.18L270.96 160.86L271.28 159.10L272.13 160.68L273.90 160.44L272.66 161.73ZM267.91 168.06L266.44 167.03L264.98 168.06L265.49 166.34L264.07 165.26L265.86 165.23L266.44 163.53L267.03 165.23L268.82 165.26L267.40 166.34ZM261.72 171.85L260.43 170.61L258.82 171.39L259.60 169.78L258.36 168.49L260.13 168.74L260.98 167.16L261.29 168.92L263.05 169.23L261.48 170.08ZM255.01 174.63L253.93 173.21L252.21 173.73L253.23 172.26L252.21 170.79L253.93 171.31L255.01 169.88L255.04 171.67L256.73 172.26L255.04 172.84ZM247.94 176.33L247.10 174.75L245.32 175.00L246.56 173.70L245.78 172.09L247.40 172.87L248.69 171.63L248.44 173.41L250.02 174.25L248.26 174.57ZM240.70 176.90L240.11 175.21L238.32 175.17L239.75 174.09L239.23 172.38L240.70 173.40L242.17 172.38L241.65 174.09L243.08 175.17L241.29 175.21ZM233.46 176.33L233.14 174.57L231.38 174.25L232.96 173.41L232.71 171.63L234.00 172.87L235.62 172.09L234.84 173.70L236.08 175.00L234.30 174.75ZM226.39 174.63L226.36 172.84L224.67 172.26L226.36 171.67L226.39 169.88L227.47 171.31L229.19 170.79L228.17 172.26L229.19 173.73L227.47 173.21ZM219.68 171.85L219.92 170.08L218.35 169.23L220.11 168.92L220.42 167.16L221.27 168.74L223.04 168.49L221.80 169.78L222.58 171.39L220.97 170.61ZM213.49 168.06L214.00 166.34L212.58 165.26L214.37 165.23L214.96 163.53L215.54 165.23L217.33 165.26L215.91 166.34L216.42 168.06L214.96 167.03ZM207.96 163.34L208.74 161.73L207.50 160.44L209.27 160.68L210.12 159.10L210.44 160.86L212.20 161.18L210.62 162.03L210.86 163.80L209.57 162.56ZM203.24 157.81L204.27 156.34L203.24 154.88L204.96 155.39L206.04 153.97L206.07 155.76L207.77 156.34L206.07 156.93L206.04 158.72L204.96 157.30ZM199.45 151.62L200.69 150.33L199.91 148.72L201.52 149.50L202.81 148.26L202.56 150.03L204.14 150.88L202.38 151.19L202.07 152.95L201.22 151.38ZM196.67 144.91L198.09 143.83L197.57 142.11L199.04 143.13L200.51 142.11L199.99 143.83L201.42 144.91L199.63 144.94L199.04 146.63L198.46 144.94ZM194.97 137.84L196.55 137.00L196.30 135.22L197.60 136.46L199.21 135.68L198.43 137.30L199.67 138.59L197.89 138.34L197.05 139.92L196.73 138.16ZM194.40 130.60L196.09 130.01L196.13 128.22L197.21 129.65L198.92 129.13L197.90 130.60L198.92 132.07L197.21 131.55L196.13 132.98L196.09 131.19ZM194.97 123.36L196.73 123.04L197.05 121.28L197.89 122.86L199.67 122.61L198.43 123.90L199.21 125.52L197.60 124.74L196.30 125.98L196.55 124.20ZM196.67 116.29L198.46 116.26L199.04 114.57L199.63 116.26L201.42 116.29L199.99 117.37L200.51 119.09L199.04 118.07L197.57 119.09L198.09 117.37ZM199.45 109.58L201.22 109.82L202.07 108.25L202.38 110.01L204.14 110.32L202.56 111.17L202.81 112.94L201.52 111.70L199.91 112.48L200.69 110.87ZM203.24 103.39L204.96 103.90L206.04 102.48L206.07 104.27L207.77 104.86L206.07 105.44L206.04 107.23L204.96 105.81L203.24 106.32L204.27 104.86ZM207.96 97.86L209.57 98.64L210.86 97.40L210.62 99.17L212.20 100.02L210.44 100.34L210.12 102.10L209.27 100.52L207.50 100.76L208.74 99.47ZM213.49 93.14L214.96 94.17L216.42 93.14L215.91 94.86L217.33 95.94L215.54 95.97L214.96 97.67L214.37 95.97L212.58 95.94L214.00 94.86ZM219.68 89.35L220.97 90.59L222.58 89.81L221.80 91.42L223.04 92.71L221.27 92.46L220.42 94.04L220.11 92.28L218.35 91.97L219.92 91.12ZM226.39 86.57L227.47 87.99L229.19 87.47L228.17 88.94L229.19 90.41L227.47 89.89L226.39 91.32L226.36 89.53L224.67 88.94L226.36 88.36ZM233.46 84.87L234.30 86.45L236.08 86.20L234.84 87.50L235.62 89.11L234.00 88.33L232.71 89.57L232.96 87.79L231.38 86.95L233.14 86.63ZM240.70 84.30L241.29 85.99L243.08 86.03L241.65 87.11L242.17 88.82L240.70 87.80L239.23 88.82L239.75 87.11L238.32 86.03L240.11 85.99ZM247.94 84.87L248.26 86.63L250.02 86.95L248.44 87.79L248.69 89.57L247.40 88.33L245.78 89.11L246.56 87.50L245.32 86.20L247.10 86.45ZM255.01 86.57L255.04 88.36L256.73 88.94L255.04 89.53L255.01 91.32L253.93 89.89L252.21 90.41L253.23 88.94L252.21 87.47L253.93 87.99ZM261.72 89.35L261.48 91.12L263.05 91.97L261.29 92.28L260.98 94.04L260.13 92.46L258.36 92.71L259.60 91.42L258.82 89.81L260.43 90.59ZM267.91 93.14L267.40 94.86L268.82 95.94L267.03 95.97L266.44 97.67L265.86 95.97L264.07 95.94L265.49 94.86L264.98 93.14L266.44 94.17ZM273.44 97.86L272.66 99.47L273.90 100.76L272.13 100.52L271.28 102.10L270.96 100.34L269.20 100.02L270.78 99.17L270.54 97.40L271.83 98.64ZM278.16 103.39L277.13 104.86L278.16 106.32L276.44 105.81L275.36 107.23L275.33 105.44L273.63 104.86L275.33 104.27L275.36 102.48L276.44 103.90ZM281.95 109.58L280.71 110.87L281.49 112.48L279.88 111.70L278.59 112.94L278.84 111.17L277.26 110.32L279.02 110.01L279.33 108.25L280.18 109.82ZM284.73 116.29L283.31 117.37L283.83 119.09L282.36 118.07L280.89 119.09L281.41 117.37L279.98 116.29L281.77 116.26L282.36 114.57L282.94 116.26ZM286.43 123.36L284.85 124.20L285.10 125.98L283.80 124.74L282.19 125.52L282.97 123.90L281.73 122.61L283.51 122.86L284.35 121.28L284.67 123.04Z" fill="#fff"/>
<g font-family="Liberation Serif,serif" font-weight="bold" fill="#fff" stroke="#fff" stroke-width=".45"><text font-size="15.2" letter-spacing="-1"><textPath href="#arcT" startOffset="50%" text-anchor="middle">DILLON</textPath></text><text font-size="15.2" letter-spacing="1.7"><textPath href="#arcB" startOffset="50.8%" text-anchor="middle">COUNTY</textPath></text><text x="206.3" y="133.9" font-size="8" text-anchor="middle" font-weight="normal" stroke-width=".2">19</text><text x="275.3" y="133.9" font-size="8" text-anchor="middle" font-weight="normal" stroke-width=".2">10</text></g>
<g fill="#fff" stroke="none"><path d="M239.5 112.1H241.9L242.4 135.6L241.7 139.6L242.3 148.1H239.1L239.7 139.6L239.0 135.6Z"/><ellipse cx="240.7" cy="150.8" rx="9.6" ry="2.4"/><rect x="225.5" y="116.0" width="30.4" height="1.4"/><path d="M217.7 136.0H235.7Q234.7 142.2 226.7 142.4Q218.7 142.2 217.7 136.0Z"/><path d="M245.7 136.0H263.7Q262.7 142.2 254.7 142.4Q246.7 142.2 245.7 136.0Z"/><path d="M218.7 135.2Q220.7 130.1 226.7 129.8Q232.7 130.1 234.7 135.2Z" opacity=".9"/><path d="M246.7 135.2Q248.7 131.6 254.7 131.4Q260.7 131.6 262.7 135.2Z" opacity=".9"/><path d="M256.7 118.6L260.1 118.6L261.1 132.6L256.1 132.6Z" opacity=".9"/></g>
<g fill="none" stroke="#fff" stroke-width=".8"><path d="M226.1 117.0L218.3 136.0M226.1 117.0L234.7 136.0"/><path d="M255.3 117.0L263.1 136.0M255.3 117.0L246.7 136.0"/></g>
<path d="M231.50 108.20L232.14 109.92L233.97 110.00L232.54 111.14L233.03 112.90L231.50 111.89L229.97 112.90L230.46 111.14L229.03 110.00L230.86 109.92ZM240.70 105.80L241.34 107.52L243.17 107.60L241.74 108.74L242.23 110.50L240.70 109.49L239.17 110.50L239.66 108.74L238.23 107.60L240.06 107.52ZM249.90 108.20L250.54 109.92L252.37 110.00L250.94 111.14L251.43 112.90L249.90 111.89L248.37 112.90L248.86 111.14L247.43 110.00L249.26 109.92Z" fill="#fff"/>
</svg>
<div class="cell" style="top:186px;height:118px;"></div>
<div class="cell" style="top:306px;height:40px;"></div>
<div class="cell" style="top:348px;height:298px;"></div>
<div class="cell" style="top:648px;height:143px;"></div>
<div class="t h16" style="left:8px;width:339px;top:188px;">Disclaimer</div>
<div class="t" style="left:10.3px;top:217.5px;">The purpose of this map is to display the geographic location of a</div><div class="t" style="left:10.3px;top:229.5px;">variety of data sources frequently updated from local government and</div><div class="t" style="left:10.3px;top:241.5px;">other agencies. Neither WTH Technology nor the agencies providing</div><div class="t" style="left:10.3px;top:253.5px;">this data make any warranty concerning its accuracy or</div><div class="t" style="left:10.3px;top:265.5px;">merchantability. And no part of it should be used as a legal description</div><div class="t" style="left:10.3px;top:277.5px;">or document.</div>
<div class="t h16" style="left:8px;width:339px;top:308px;">Think GIS<br>Quick Start Guide</div>
<div class="t h12" style="left:11px;top:350px;">Search</div>
<div class="t" style="left:15.2px;top:369.5px;">Use the Search box on the tool bar to find</div><div class="t" style="left:15.2px;top:381.5px;">anything on the map. Type an address,</div><div class="t" style="left:15.2px;top:393.5px;">intersection, parcel number, owner name, or</div><div class="t" style="left:15.2px;top:405.5px;">other text and press Enter.</div>
<div class="t" style="left:15.2px;top:428.5px;">Examples:</div>
<div class="t" style="left:112.5px;top:428.5px;">123 N Main St</div><div class="t" style="left:112.5px;top:440.5px;">850 main st, ferdinand</div><div class="t" style="left:112.5px;top:452.5px;">Walnut St/3rd St</div><div class="t" style="left:112.5px;top:464.5px;">19-06-35-102-218.000-002</div><div class="t" style="left:112.5px;top:476.5px;">john smith</div><div class="t" style="left:112.5px;top:488.5px;">holiday lake</div><div class="t" style="left:112.5px;top:500.5px;">kellerville rd</div><div class="t" style="left:112.5px;top:512.5px;">mcdonalds</div>
<svg class="abs" style="left:240px;top:369px;" width="100" height="50" viewBox="0 0 100 50"><defs><linearGradient id="bg1" x1="0" y1="0" x2="0" y2="1"><stop offset="0" stop-color="#f4efee"/><stop offset="1" stop-color="#cfc8c4"/></linearGradient><clipPath id="sc"><rect x="1" y="1" width="98" height="48"/></clipPath></defs><rect x=".5" y=".5" width="99" height="49" fill="#99c5f5" stroke="#000" stroke-width="1"/><g clip-path="url(#sc)"><rect x="1" y="1" width="98" height="3.6" fill="#a8b8d6" opacity=".55"/><rect x="-6" y="7.2" width="15.4" height="18" rx="2.4" fill="url(#bg1)" stroke="#8ea6c8" stroke-width=".8"/><rect x="19" y="6" width="82" height="20" fill="#fff"/><path d="M18.6 26V5.8H100" fill="none" stroke="#4a4f55" stroke-width="1.3"/><path d="M19 26.4H100" stroke="#dfe3e8" stroke-width=".9"/><text x="21.4" y="20.7" font-family="Liberation Sans,Arial,sans-serif" font-size="13" textLength="63.6" lengthAdjust="spacing" fill="#000">John Smith</text><path d="M86.4 8.6V24" stroke="#000" stroke-width="1"/><rect x="1" y="32" width="98" height="17" fill="#fdfab0"/><g fill="none" stroke="#a09a5c" stroke-width=".9"><path d="M4 32V49M17 34V49M17 40H28M17 43.5H28M17 46.5H28M28 32V49M23 34L22 40M38 34V40M36 45H42M48 44L52 48L56 43M66 45H84M70 45V49M78 45V49"/><path d="M50 34.5H99M56 37.5H99M70 40.5H99M56 32V37M62 32V40M68 32V41M74 32V41M80 32V41M86 32V41"/><path d="M90.5 32V49M93.5 32V49M96.5 32V49M90 35H99M90 38H99M90 41H99M90 44H99M90 47H99"/></g><path d="M41.4 33Q46 37 54 38.4Q62 41 66 41.6H88" fill="none" stroke="#e4434a" stroke-width="2.4"/><path d="M66 41.6Q61 43 61.6 49" fill="none" stroke="#e4434a" stroke-width="2.4"/><path d="M88 32V49" fill="none" stroke="#d8506c" stroke-width="2.2"/></g><path d="M.5 31.4H99.5" stroke="#000" stroke-width="1"/><rect x=".5" y=".5" width="99" height="49" fill="none" stroke="#000" stroke-width="1"/></svg>
<div class="t" style="left:15.2px;top:548.5px;">Click the</div>
<div class="btn" style="left:59px;top:533px;width:30px;height:26px;"></div>
<div class="t" style="left:92px;top:548.5px;">button to recall previous search results</div>
<div class="t" style="left:15.2px;top:584.5px;">Click the</div>
<div class="btn" style="left:59px;top:569px;width:30px;height:26px;"></div>
<div class="t" style="left:92px;top:584.5px;">button to clear results window and map highlighting</div>
<div class="t" style="left:15.2px;top:626.5px;">Click the</div>
<div class="btn" style="left:59px;top:605px;width:68px;height:32px;"></div>
<div class="t pt" style="left:62.4px;top:614px;">Parcel Tools</div>
<div class="t" style="left:130px;top:626.5px;">button for more search options</div>
<svg class="abs" style="left:59px;top:533px;" width="30" height="64" viewBox="59 533 30 64"><path d="M65 542.4L73 534.6V537.8H78.6V547.2H73V550.4Z" fill="#ece6e0" stroke="#000" stroke-width=".9"/><path d="M67.6 572.2L79 583.4M79 572.2L67.6 583.4" stroke="#000" stroke-width="2"/></svg>
<div class="lb" style="left:63.80px;top:549.64px;font-size:7.4px;letter-spacing:0.17px;word-spacing:-0.66px;">Prev</div>
<div class="lb" style="left:63.15px;top:585.64px;font-size:7.4px;letter-spacing:-0.42px;word-spacing:-0.66px;">Clear</div>
<div class="t h12" style="left:10.4px;top:650px;">Identify</div>
<div class="btn" style="left:15px;top:669px;width:32px;height:32px;"></div>
<svg class="abs" style="left:15px;top:669px;" width="32" height="32" viewBox="15 669 32 32"><path d="M26.40 672.60 L26.40 685.31 L29.41 682.88 L32.41 689.67 L34.74 688.51 L31.83 682.20 L35.71 681.91Z" fill="#fff" stroke="#000" stroke-width="1.02" stroke-linejoin="miter"/></svg>
<div class="lb" style="left:18.45px;top:690.62px;font-size:8.6px;letter-spacing:-1.13px;word-spacing:-0.70px;">Id Ftr</div>
<div class="t" style="left:50px;top:690.5px;">Click on anything you see on the map</div>
<div class="t" style="left:15.2px;top:702.5px;">to get detailed information. This includes any</div><div class="t" style="left:15.2px;top:714.5px;">visible feature such as parcels, roads, water</div><div class="t" style="left:15.2px;top:726.5px;">ways, and address points.</div>
<div class="t" style="left:15.2px;top:746.5px;">This action uses the regular mouse pointer. It is not necessary to</div><div class="t" style="left:15.2px;top:758.5px;">select any tool first. When selecting an area based feature, click just</div><div class="t" style="left:15.2px;top:770.5px;">inside the boundary for best results.</div>
<svg class="abs" style="left:240px;top:679px;" width="100" height="50" viewBox="0 0 100 50"><defs><clipPath id="ic"><rect x="1" y="1" width="98" height="48"/></clipPath></defs><rect x=".5" y=".5" width="99" height="49" fill="#fffbd6"/><g clip-path="url(#ic)"><rect x="1" y="1" width="98" height="6.4" fill="#ecebe4"/><path d="M1 1H17V49H1Z" fill="#e9e8e2"/><path d="M8 12H17V49H8Z" fill="#e2e1dc"/><g fill="none" stroke="#d9d5b0" stroke-width=".7"><path d="M17 11V49M33 11V32M33 20H44M33 26H44M33 30H44M44 11V49M48 18H54M48 23H54M48 28H54M54 11V32M52 36L62 30L72 42L60 48ZM58 34L66 45M62 30L68 28L80 46M56 12L66 30M82 1V49M84 11V49M40 36V49M30 40H44"/></g><g fill="none" stroke="#fff" stroke-width="2.6" stroke-linecap="round" stroke-linejoin="round"><path d="M5 38V13Q5 9 9 9H99"/><path d="M46 10V40L50 46"/><path d="M30 31H46"/><path d="M1 36L5 38M50 46L58 45L64 42"/></g><g fill="none" stroke="#cfcdc4" stroke-width=".6"><path d="M7 38V14Q7 11 10 11H44M48 11H99M3.4 36V12Q3.4 7.4 8 7.4H99"/></g><path d="M20 20.6H35L31.6 27H23.6V38H19Z" fill="#f9f926" stroke="#f9f926" stroke-width="1.6" stroke-linejoin="round"/><path d="M22.6 24.4H30L28.6 27.4H24.6V36H22.6Z" fill="#fffbd6"/><g fill="#111"><rect x="21.6" y="3.4" width="1.3" height="1.3"/><rect x="25.6" y="12.2" width="1.3" height="1.3"/><rect x="39.6" y="13.4" width="1.3" height="1.3"/><rect x="39.6" y="18.4" width="1.3" height="1.3"/><rect x="49.6" y="13.4" width="1.3" height="1.3"/><rect x="49.6" y="24.4" width="1.3" height="1.3"/><rect x="40.6" y="36.4" width="1.3" height="1.3"/><rect x="56.6" y="38.2" width="1.3" height="1.3"/><rect x="64.6" y="36.4" width="1.3" height="1.3"/><rect x="83.6" y="13.4" width="1.3" height="1.3"/><rect x="85.8" y="13.4" width="1.3" height="1.3"/></g><text x="50.6" y="13.3" font-family="Liberation Sans,Arial,sans-serif" font-size="9.6" textLength="24" lengthAdjust="spacing" fill="#000" stroke="#000" stroke-width=".2">150 N</text><path d="M1.6 45.6L4.6 46.6L8 46M4 48.4L8.4 47.4" stroke="#000" stroke-width=".9" fill="none"/><path d="M25.4 25.4V38.6L28.6 36L31.8 43.4L34.4 42.2L31.2 35.4L35.6 35.2Z" fill="#fff" stroke="#000" stroke-width="1.1" stroke-linejoin="miter"/></g><rect x=".5" y=".5" width="99" height="49" fill="none" stroke="#000" stroke-width="1"/></svg>
</body>
</html>
